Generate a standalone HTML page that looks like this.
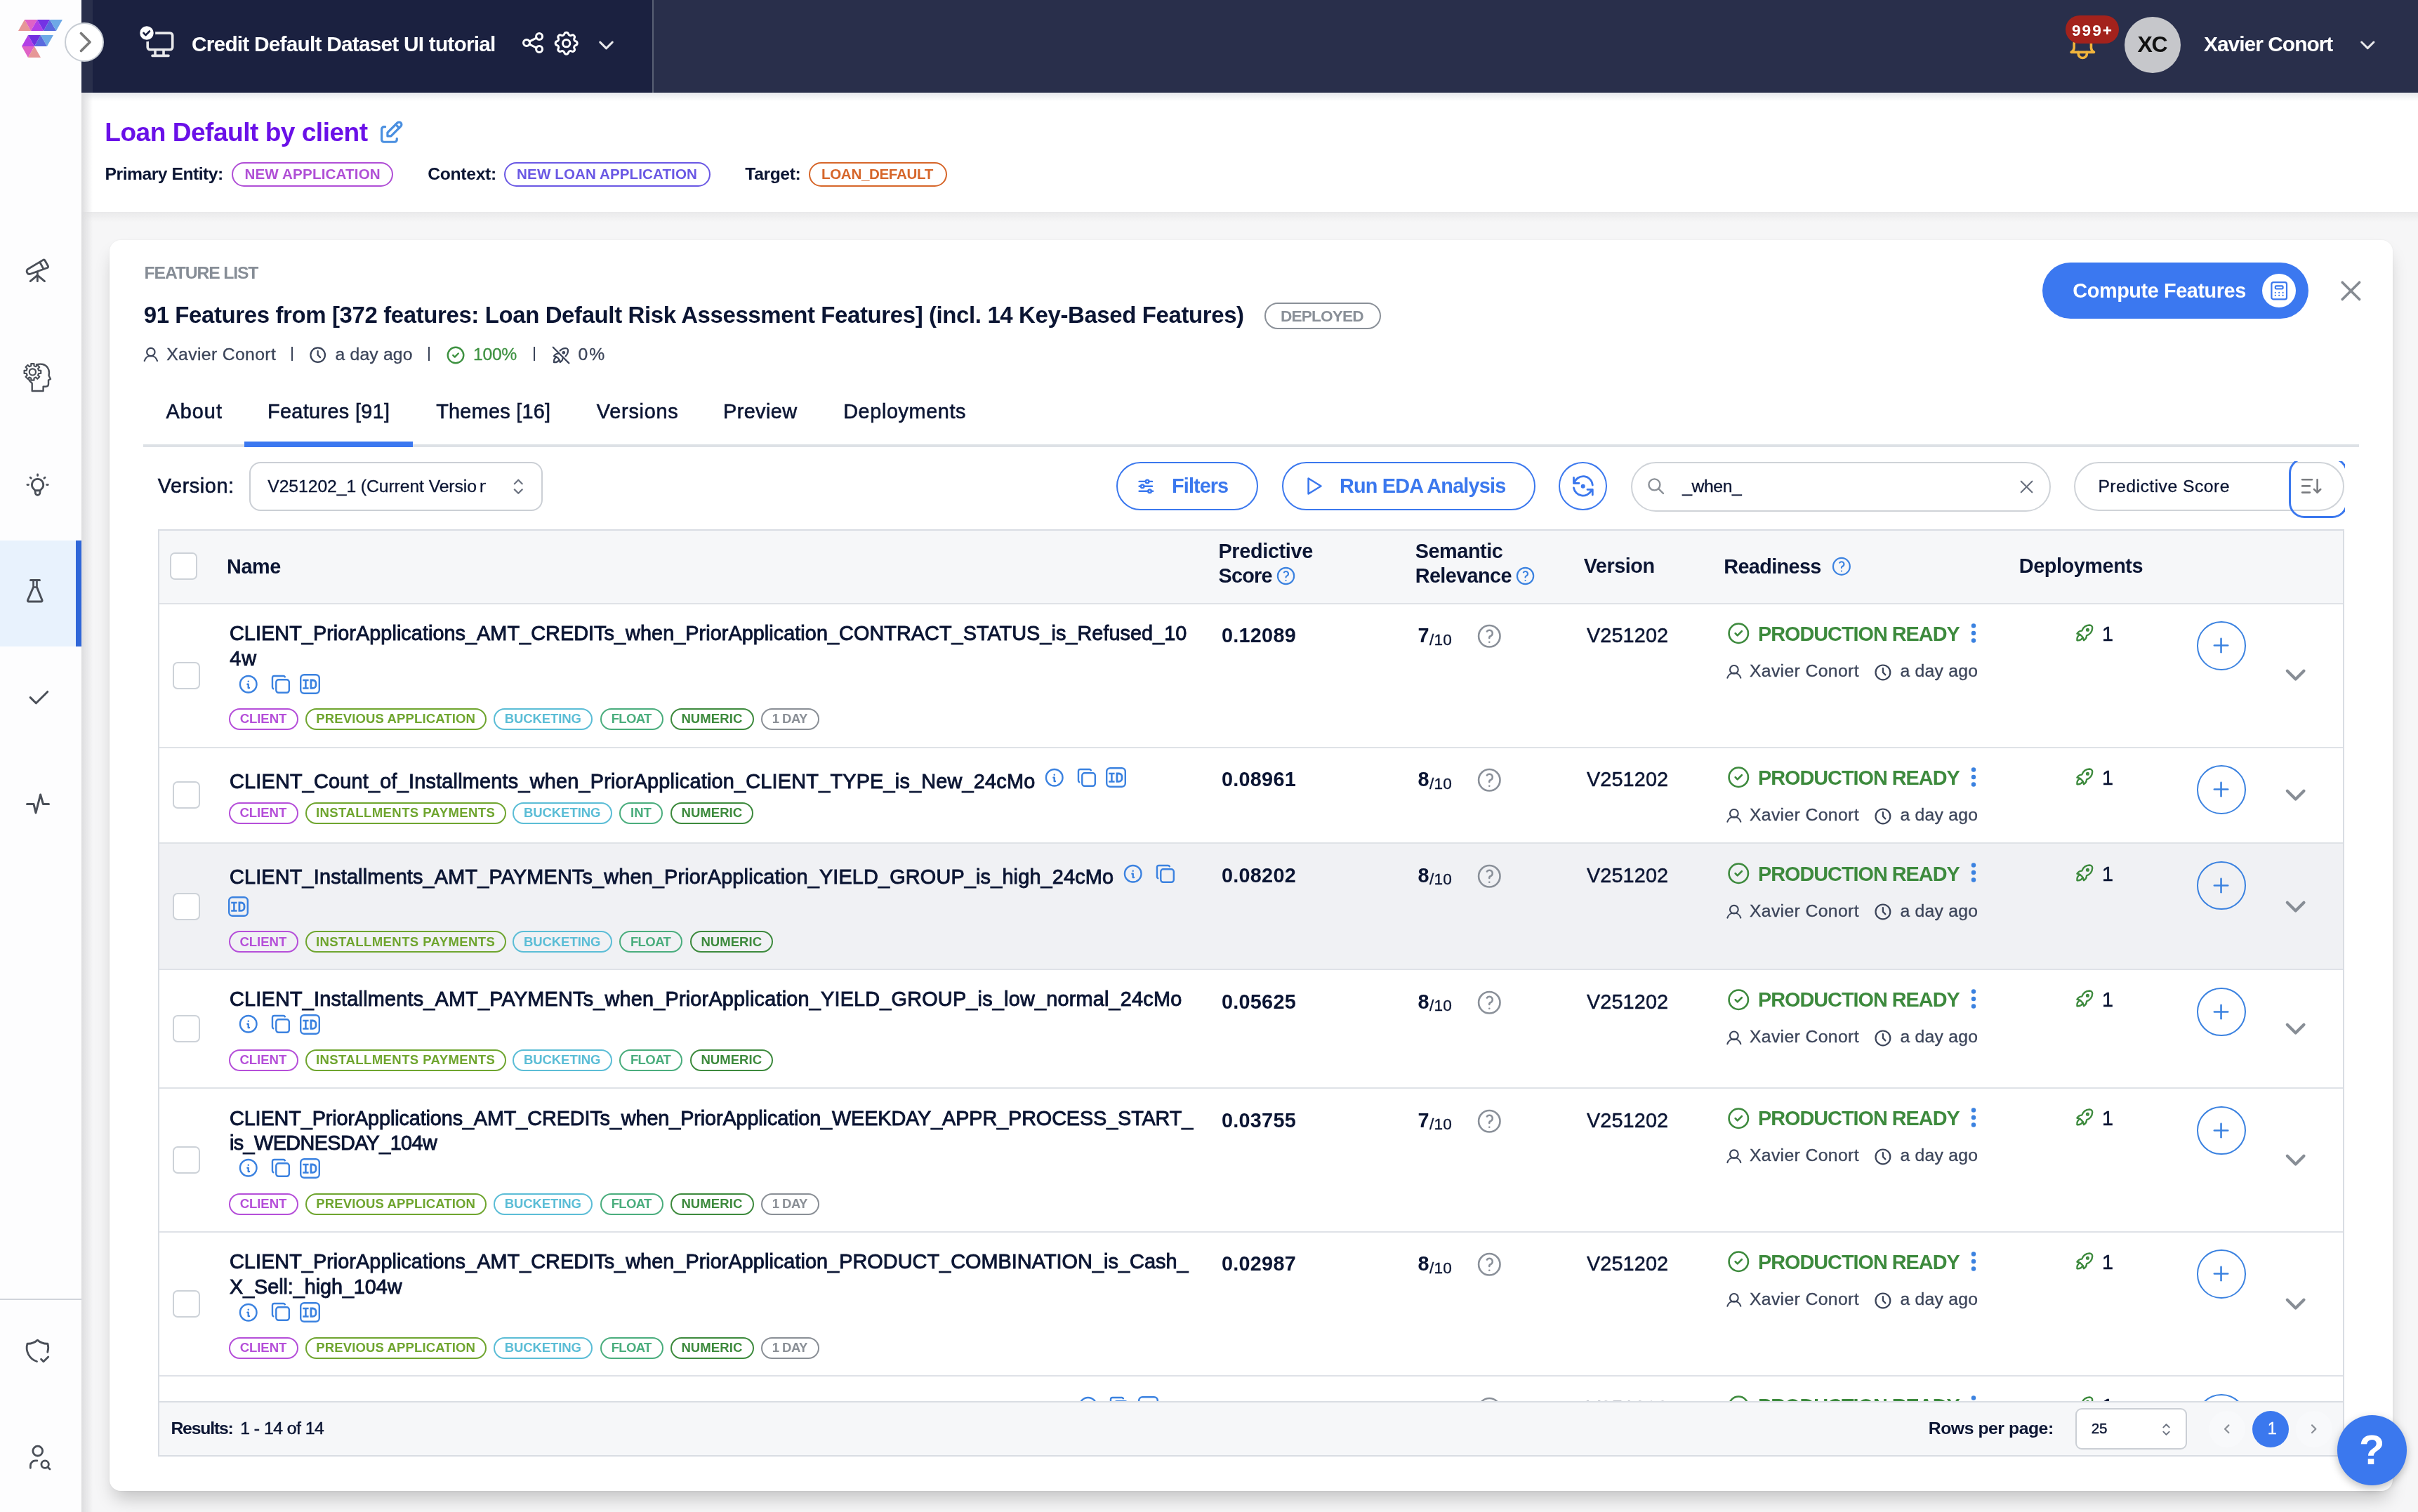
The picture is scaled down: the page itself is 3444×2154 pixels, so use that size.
<!DOCTYPE html><html><head><meta charset="utf-8"><title>Feature List</title><style>
html,body{margin:0;padding:0;}
body{width:3444px;height:2154px;position:relative;overflow:hidden;background:#f6f6f7;font-family:"Liberation Sans",sans-serif;}
div{box-sizing:border-box;}
.t{position:absolute;white-space:nowrap;line-height:1;}
svg{overflow:visible}
</style></head><body><div style="position:absolute;left:0;top:0;width:3444px;height:2154px;will-change:transform;">
<div style="position:absolute;left:116.00px;top:132.00px;width:3328.00px;height:170.00px;background:#fff;"></div>
<div style="position:absolute;left:116.00px;top:132.00px;width:3328.00px;height:12.00px;background:linear-gradient(#e6e8ec,rgba(255,255,255,0));"></div>
<div style="position:absolute;left:116.00px;top:302.00px;width:3328.00px;height:14.00px;background:linear-gradient(#e9e9ea,rgba(245,245,246,0));"></div>
<div style="position:absolute;left:116.00px;top:0.00px;width:3328.00px;height:132.00px;background:#292f4b;"></div>
<div style="position:absolute;left:132.00px;top:0.00px;width:797.00px;height:132.00px;background:#1b2140;"></div>
<div style="position:absolute;left:929.00px;top:0.00px;width:2.00px;height:132.00px;background:#596074;"></div>
<div style="position:absolute;left:0.00px;top:0.00px;width:116.00px;height:2154.00px;background:#fdfdfe;"></div>
<div style="position:absolute;left:116.00px;top:132.00px;width:16.00px;height:2022.00px;background:linear-gradient(90deg,#dcdcde,rgba(245,245,246,0));"></div>
<div style="position:absolute;left:0.00px;top:1850.00px;width:116.00px;height:2.00px;background:#d0d4da;"></div>
<svg style="position:absolute;left:0px;top:0px;" width="116" height="100" viewBox="0 0 116 100" fill="none"><polygon points="26,44 35,28 44,44" fill="#e69797"/><polygon points="35,28 53,28 44,44" fill="#df62c6"/><polygon points="44,44 53,28 62,44" fill="#b23fe6"/><polygon points="53,28 71,28 62,44" fill="#7433e4"/><polygon points="62,44 71,28 80,44" fill="#5a6ade"/><polygon points="71,28 89,28 80,44" fill="#6ea9e6"/><polygon points="31,66 40,50 49,66" fill="#b23fe6"/><polygon points="40,50 58,50 49,66" fill="#7030e0"/><polygon points="49,66 58,50 67,66" fill="#5a6ade"/><polygon points="58,50 76,50 67,66" fill="#6ea9e6"/><polygon points="31,66 49,66 40,82" fill="#df62c6"/><polygon points="40,82 49,66 58,82" fill="#e69797"/></svg>
<div style="position:absolute;left:92.00px;top:32.00px;width:56.00px;height:56.00px;border-radius:50%;background:#fff;border:2px solid #c8cdd4;"></div>
<svg style="position:absolute;left:92px;top:32px;" width="56" height="56" viewBox="0 0 56 56" fill="none"><path d="M23.5 15.5 L36 28 L23.5 40.5" stroke="#7b7b7b" stroke-width="3.8" stroke-linecap="round" stroke-linejoin="round"/></svg>
<svg style="position:absolute;left:196px;top:34px;" width="56" height="52" viewBox="0 0 56 52" fill="none"><rect x="14.2" y="13.1" width="35.5" height="23.7" rx="3.5" stroke="#e8e8ea" stroke-width="3.6"/>
<path d="M25 38 v6 M37 38 v6 M21 45.4 h23" stroke="#e8e8ea" stroke-width="3.6" stroke-linecap="round"/>
<circle cx="13" cy="13" r="11" fill="#fff" stroke="#1b2140" stroke-width="2.5"/>
<path d="M8.5 13 l3 3 l5.5-5.5" stroke="#1b2140" stroke-width="2.6" stroke-linecap="round" stroke-linejoin="round"/></svg>
<div class="t" style="left:273.00px;top:48.01px;font-size:29.87px;color:#ffffff;font-weight:700;letter-spacing:-0.794px;">Credit Default Dataset UI tutorial</div>
<svg style="position:absolute;left:741.08px;top:43.28px;" width="36.13" height="36.13" viewBox="0 0 24 24" fill="none" stroke="#ffffff" stroke-width="1.993" stroke-linecap="round" stroke-linejoin="round"><path d="M3 12a3 3 0 1 0 6 0a3 3 0 1 0 -6 0"/><path d="M15 6a3 3 0 1 0 6 0a3 3 0 1 0 -6 0"/><path d="M15 18a3 3 0 1 0 6 0a3 3 0 1 0 -6 0"/><path d="M8.7 10.7l6.6 -3.4"/><path d="M8.7 13.3l6.6 3.4"/></svg>
<svg style="position:absolute;left:786.33px;top:41.33px;" width="41.33" height="41.33" viewBox="0 0 24 24" fill="none" stroke="#ffffff" stroke-width="1.742" stroke-linecap="round" stroke-linejoin="round"><path d="M10.325 4.317c.426 -1.756 2.924 -1.756 3.35 0a1.724 1.724 0 0 0 2.573 1.066c1.543 -.94 3.31 .826 2.37 2.37a1.724 1.724 0 0 0 1.065 2.572c1.756 .426 1.756 2.924 0 3.35a1.724 1.724 0 0 0 -1.066 2.573c.94 1.543 -.826 3.31 -2.37 2.37a1.724 1.724 0 0 0 -2.572 1.065c-.426 1.756 -2.924 1.756 -3.35 0a1.724 1.724 0 0 0 -2.573 -1.066c-1.543 .94 -3.31 -.826 -2.37 -2.37a1.724 1.724 0 0 0 -1.065 -2.572c-1.756 -.426 -1.756 -2.924 0 -3.35a1.724 1.724 0 0 0 1.066 -2.573c-.94 -1.543 .826 -3.31 2.37 -2.37c1 .608 2.296 .07 2.572 -1.065z"/><path d="M9 12a3 3 0 1 0 6 0a3 3 0 0 0 -6 0"/></svg>
<svg style="position:absolute;left:845.50px;top:46.50px;" width="35.00" height="35.00" viewBox="0 0 24 24" fill="none" stroke="#e8e8ea" stroke-width="2.057" stroke-linecap="round" stroke-linejoin="round"><path d="M6 9l6 6l6 -6"/></svg>
<svg style="position:absolute;left:2941.50px;top:39.70px;" width="48.60" height="48.60" viewBox="0 0 24 24" fill="none" stroke="#f0b43c" stroke-width="1.778" stroke-linecap="round" stroke-linejoin="round"><path d="M10 5a2 2 0 1 1 4 0a7 7 0 0 1 4 6v3a4 4 0 0 0 2 3h-16a4 4 0 0 0 2 -3v-3a7 7 0 0 1 4 -6"/><path d="M9 17v1a3 3 0 0 0 6 0v-1"/></svg>
<div style="position:absolute;left:2942.00px;top:22.00px;width:76.00px;height:40.00px;background:#a3221c;border-radius:20px;"></div>
<div class="t" style="left:2951.00px;top:31.74px;font-size:22.66px;color:#ffffff;font-weight:700;letter-spacing:1.967px;">999+</div>
<div style="position:absolute;left:3026.00px;top:24.00px;width:80.00px;height:80.00px;background:#c6c7cb;border-radius:50%;"></div>
<div class="t" style="left:3044.50px;top:48.26px;font-size:31.93px;color:#111111;font-weight:700;letter-spacing:-1.300px;">XC</div>
<div class="t" style="left:3139.00px;top:48.41px;font-size:29.87px;color:#ffffff;font-weight:700;letter-spacing:-0.958px;">Xavier Conort</div>
<svg style="position:absolute;left:3354.70px;top:46.60px;" width="34.60" height="34.60" viewBox="0 0 24 24" fill="none" stroke="#e8e8ea" stroke-width="2.081" stroke-linecap="round" stroke-linejoin="round"><path d="M6 9l6 6l6 -6"/></svg>
<div class="t" style="left:149.30px;top:170.48px;font-size:37.08px;color:#6a10e8;font-weight:700;letter-spacing:-0.500px;">Loan Default by client</div>
<svg style="position:absolute;left:536.88px;top:168.99px;" width="39.88" height="39.88" viewBox="0 0 24 24" fill="none" stroke="#4a8fe0" stroke-width="1.926" stroke-linecap="round" stroke-linejoin="round"><path d="M7 7h-1a2 2 0 0 0 -2 2v9a2 2 0 0 0 2 2h9a2 2 0 0 0 2 -2v-1"/><path d="M20.385 6.585a2.1 2.1 0 0 0 -2.97 -2.97l-8.415 8.385v3h3l8.385 -8.415z"/><path d="M16 5l3 3"/></svg>
<div class="t" style="left:149.60px;top:235.79px;font-size:24.72px;color:#0b1533;font-weight:700;letter-spacing:-0.514px;">Primary Entity:</div>
<div style="position:absolute;left:330.40px;top:231.00px;width:229.90px;height:35.00px;border:2px solid #b04fd6;border-radius:40px;"></div>
<div class="t" style="left:348.40px;top:238.49px;font-size:20.6px;color:#b04fd6;font-weight:700;letter-spacing:0.164px;">NEW APPLICATION</div>
<div class="t" style="left:609.20px;top:235.79px;font-size:24.72px;color:#0b1533;font-weight:700;letter-spacing:-0.314px;">Context:</div>
<div style="position:absolute;left:718.40px;top:231.00px;width:293.30px;height:35.00px;border:2px solid #6a58e4;border-radius:40px;"></div>
<div class="t" style="left:736.10px;top:238.49px;font-size:20.6px;color:#6a58e4;font-weight:700;letter-spacing:0.089px;">NEW LOAN APPLICATION</div>
<div class="t" style="left:1061.30px;top:235.79px;font-size:24.72px;color:#0b1533;font-weight:700;letter-spacing:-0.417px;">Target:</div>
<div style="position:absolute;left:1152.30px;top:231.00px;width:196.40px;height:35.00px;border:2px solid #d6662a;border-radius:40px;"></div>
<div class="t" style="left:1170.00px;top:238.49px;font-size:20.6px;color:#d6662a;font-weight:700;letter-spacing:-0.364px;">LOAN_DEFAULT</div>
<div style="position:absolute;left:156.00px;top:342.00px;width:3252.00px;height:1782.00px;background:#fff;border-radius:16px;box-shadow:0 16px 26px -6px rgba(0,0,0,0.22),0 0 3px rgba(0,0,0,0.07);"></div>
<div class="t" style="left:205.60px;top:376.89px;font-size:24.72px;color:#868d96;font-weight:700;letter-spacing:-1.136px;">FEATURE LIST</div>
<div class="t" style="left:204.70px;top:432.78px;font-size:32.96px;color:#0b1533;font-weight:700;letter-spacing:-0.379px;">91 Features from [372 features: Loan Default Risk Assessment Features] (incl. 14 Key-Based Features)</div>
<div style="position:absolute;left:1800.50px;top:430.50px;width:166.70px;height:38.50px;border:2px solid #8a9098;border-radius:40px;"></div>
<div class="t" style="left:1824.00px;top:439.24px;font-size:22.66px;color:#8a9098;font-weight:700;letter-spacing:-0.843px;">DEPLOYED</div>
<svg style="position:absolute;left:0px;top:0px;" width="1" height="1" viewBox="0 0 1 1" fill="none"><circle cx="214.85" cy="501.50" r="5.70" stroke="#3b4459" stroke-width="2.2"/><path d="M205.70 514.20 C207.39 509.12 209.58 507.06 214.85 507.06 C220.13 507.06 222.31 509.12 224.00 514.20" stroke="#3b4459" stroke-width="2.2" stroke-linecap="round"/></svg>
<div class="t" style="left:237.20px;top:492.99px;font-size:24.72px;color:#3b4459;letter-spacing:0.375px;-webkit-text-stroke:0.3px #3b4459;">Xavier Conort</div>
<div style="position:absolute;left:415.00px;top:494.00px;width:2.00px;height:20.00px;background:#3b4459;"></div>
<svg style="position:absolute;left:439.15px;top:491.90px;" width="27.40" height="27.40" viewBox="0 0 24 24" fill="none" stroke="#3b4459" stroke-width="1.927" stroke-linecap="round" stroke-linejoin="round"><path d="M3 12a9 9 0 1 0 18 0a9 9 0 0 0 -18 0"/><path d="M12 7v5l3 3"/></svg>
<div class="t" style="left:477.50px;top:492.99px;font-size:24.72px;color:#3b4459;letter-spacing:0.175px;-webkit-text-stroke:0.3px #3b4459;">a day ago</div>
<div style="position:absolute;left:610.00px;top:494.00px;width:2.00px;height:20.00px;background:#3b4459;"></div>
<svg style="position:absolute;left:634.12px;top:490.57px;" width="30.07" height="30.07" viewBox="0 0 24 24" fill="none" stroke="#3d9140" stroke-width="1.916" stroke-linecap="round" stroke-linejoin="round"><path d="M3 12a9 9 0 1 0 18 0a9 9 0 0 0 -18 0"/><path d="M9 12l2 2l4 -4"/></svg>
<div class="t" style="left:674.00px;top:492.99px;font-size:24.72px;color:#3d9140;letter-spacing:-0.300px;-webkit-text-stroke:0.3px #3d9140;">100%</div>
<div style="position:absolute;left:760.00px;top:494.00px;width:2.00px;height:20.00px;background:#3b4459;"></div>
<svg style="position:absolute;left:783.93px;top:490.53px;" width="30.13" height="30.13" viewBox="0 0 24 24" fill="none" stroke="#3b4459" stroke-width="1.752" stroke-linecap="round" stroke-linejoin="round"><path d="M9.29 9.275a9.03 9.03 0 0 0 -.29 .725a6 6 0 0 0 -5 3a8 8 0 0 1 7 7a6 6 0 0 0 3 -5c.241 -.085 .478 -.18 .708 -.283m2.428 -1.61a9 9 0 0 0 2.864 -6.107a3 3 0 0 0 -3 -3a9 9 0 0 0 -6.107 2.864"/><path d="M7 14a6 6 0 0 0 -3 6a6 6 0 0 0 6 -3"/><path d="M14 9a1 1 0 1 0 2 0a1 1 0 1 0 -2 0"/><path d="M3 3l18 18"/></svg>
<div class="t" style="left:823.60px;top:492.99px;font-size:24.72px;color:#3b4459;letter-spacing:2.000px;-webkit-text-stroke:0.3px #3b4459;">0%</div>
<div class="t" style="left:236.50px;top:572.29px;font-size:28.84px;color:#0b1533;letter-spacing:1.025px;-webkit-text-stroke:0.6px #0b1533;">About</div>
<div class="t" style="left:381.00px;top:572.29px;font-size:28.84px;color:#0b1533;letter-spacing:0.350px;-webkit-text-stroke:0.6px #0b1533;">Features [91]</div>
<div class="t" style="left:621.20px;top:572.29px;font-size:28.84px;color:#0b1533;letter-spacing:0.270px;-webkit-text-stroke:0.6px #0b1533;">Themes [16]</div>
<div class="t" style="left:849.80px;top:572.29px;font-size:28.84px;color:#0b1533;letter-spacing:0.771px;-webkit-text-stroke:0.6px #0b1533;">Versions</div>
<div class="t" style="left:1030.00px;top:572.29px;font-size:28.84px;color:#0b1533;letter-spacing:0.417px;-webkit-text-stroke:0.6px #0b1533;">Preview</div>
<div class="t" style="left:1201.20px;top:572.29px;font-size:28.84px;color:#0b1533;letter-spacing:0.610px;-webkit-text-stroke:0.6px #0b1533;">Deployments</div>
<div style="position:absolute;left:204.00px;top:633.00px;width:3156.00px;height:4.00px;background:#dde1e6;"></div>
<div style="position:absolute;left:348.00px;top:629.00px;width:240.00px;height:8.00px;background:#3b78f0;"></div>
<div style="position:absolute;left:2909.00px;top:374.00px;width:379.00px;height:80.00px;background:#3b78f0;border-radius:40px;"></div>
<div class="t" style="left:2952.30px;top:399.89px;font-size:28.84px;color:#ffffff;font-weight:700;letter-spacing:-0.407px;">Compute Features</div>
<div style="position:absolute;left:3222.00px;top:390.00px;width:48.00px;height:48.00px;background:#fff;border-radius:50%;"></div>
<svg style="position:absolute;left:3229.79px;top:397.64px;" width="32.42" height="32.42" viewBox="0 0 24 24" fill="none" stroke="#3b78ee" stroke-width="1.629" stroke-linecap="round" stroke-linejoin="round"><path d="M4 5a2 2 0 0 1 2 -2h12a2 2 0 0 1 2 2v14a2 2 0 0 1 -2 2h-12a2 2 0 0 1 -2 -2z"/><path d="M8 8a1 1 0 0 1 1 -1h6a1 1 0 0 1 1 1v1a1 1 0 0 1 -1 1h-6a1 1 0 0 1 -1 -1z"/><path d="M8 14l0 .01"/><path d="M12 14l0 .01"/><path d="M16 14l0 .01"/><path d="M8 17l0 .01"/><path d="M12 17l0 .01"/><path d="M16 17l0 .01"/></svg>
<svg style="position:absolute;left:3323.60px;top:389.60px;" width="48.80" height="48.80" viewBox="0 0 24 24" fill="none" stroke="#868b92" stroke-width="1.770" stroke-linecap="round" stroke-linejoin="round"><path d="M18 6l-12 12"/><path d="M6 6l12 12"/></svg>
<div class="t" style="left:224.80px;top:678.39px;font-size:28.84px;color:#0b1533;letter-spacing:0.586px;-webkit-text-stroke:0.6px #0b1533;">Version:</div>
<div style="position:absolute;left:354.80px;top:657.50px;width:418.20px;height:70.80px;border:2px solid #cbcfd5;border-radius:16px;background:#fff;"></div>
<div style="position:absolute;left:378px;top:670px;width:314.3px;height:44px;overflow:hidden;">
<div class="t" style="left:3.30px;top:10.79px;font-size:24.72px;color:#0b1533;letter-spacing:-0.079px;-webkit-text-stroke:0.3px #0b1533;">V251202_1 (Current Versio</div>
<div class="t" style="left:305.00px;top:10.79px;font-size:24.72px;color:#0b1533;-webkit-text-stroke:0.3px #0b1533;">n</div>
</div>
<svg style="position:absolute;left:721.81px;top:676.61px;" width="32.57" height="32.57" viewBox="0 0 24 24" fill="none" stroke="#6b7280" stroke-width="1.621" stroke-linecap="round" stroke-linejoin="round"><path d="M8 9l4 -4l4 4"/><path d="M16 15l-4 4l-4 -4"/></svg>
<div style="position:absolute;left:1589.50px;top:658.40px;width:202.50px;height:68.40px;border:2px solid #3b78ee;border-radius:40px;"></div>
<svg style="position:absolute;left:1618.20px;top:679.17px;" width="27.65" height="27.65" viewBox="0 0 24 24" fill="none" stroke="#3b78ee" stroke-width="2.083" stroke-linecap="round" stroke-linejoin="round"><path d="M12 6a2 2 0 1 0 4 0a2 2 0 1 0 -4 0"/><path d="M4 6l8 0"/><path d="M16 6l4 0"/><path d="M6 12a2 2 0 1 0 4 0a2 2 0 1 0 -4 0"/><path d="M4 12l2 0"/><path d="M10 12l10 0"/><path d="M15 18a2 2 0 1 0 4 0a2 2 0 1 0 -4 0"/><path d="M4 18l11 0"/><path d="M19 18l2 0"/></svg>
<div class="t" style="left:1669.10px;top:678.39px;font-size:28.84px;color:#3b78ee;font-weight:700;letter-spacing:-0.917px;">Filters</div>
<div style="position:absolute;left:1825.70px;top:658.40px;width:361.30px;height:68.40px;border:2px solid #3b78ee;border-radius:40px;"></div>
<svg style="position:absolute;left:1853.92px;top:676.48px;" width="33.03" height="33.03" viewBox="0 0 24 24" fill="none" stroke="#3b78ee" stroke-width="1.889" stroke-linecap="round" stroke-linejoin="round"><path d="M7 4v16l13 -8z"/></svg>
<div class="t" style="left:1908.00px;top:678.39px;font-size:28.84px;color:#3b78ee;font-weight:700;letter-spacing:-0.807px;">Run EDA Analysis</div>
<div style="position:absolute;left:2220.00px;top:658.40px;width:68.70px;height:68.40px;border:2px solid #3b78ee;border-radius:50%;"></div>
<svg style="position:absolute;left:2220px;top:658px;" width="70" height="70" viewBox="0 0 70 70" fill="none"><path d="M21.5 22.5 V30.5 H29" stroke="#3b78ee" stroke-width="2.8" stroke-linecap="round" stroke-linejoin="round"/>
<path d="M22 30.5 A13.4 13.4 0 0 1 48.3 33" stroke="#3b78ee" stroke-width="2.8" stroke-linecap="round"/>
<path d="M21.5 37 A13.4 13.4 0 0 0 46.5 41" stroke="#3b78ee" stroke-width="2.8" stroke-linecap="round"/>
<path d="M41 39.4 H48.3 V47" stroke="#3b78ee" stroke-width="2.8" stroke-linecap="round" stroke-linejoin="round"/>
<circle cx="34.7" cy="34.7" r="3" fill="#3b78ee"/></svg>
<div style="position:absolute;left:2322.70px;top:658.00px;width:598.50px;height:70.50px;border:2px solid #cfd3d8;border-radius:40px;background:#fff;"></div>
<svg style="position:absolute;left:2344.50px;top:679.05px;" width="27.40" height="27.40" viewBox="0 0 24 24" fill="none" stroke="#8b9097" stroke-width="2.102" stroke-linecap="round" stroke-linejoin="round"><path d="M3 10a7 7 0 1 0 14 0a7 7 0 1 0 -14 0"/><path d="M21 21l-6 -6"/></svg>
<div class="t" style="left:2396.30px;top:680.79px;font-size:24.72px;color:#0b1533;letter-spacing:-0.440px;-webkit-text-stroke:0.3px #0b1533;">_when_</div>
<svg style="position:absolute;left:2870.65px;top:678.20px;" width="31.10" height="31.10" viewBox="0 0 24 24" fill="none" stroke="#6b7280" stroke-width="1.698" stroke-linecap="round" stroke-linejoin="round"><path d="M18 6l-12 12"/><path d="M6 6l12 12"/></svg>
<div style="position:absolute;left:2954.30px;top:658.00px;width:385.20px;height:70.00px;border:2px solid #cfd3d8;border-radius:40px;background:#fff;"></div>
<div class="t" style="left:2988.40px;top:681.49px;font-size:24.72px;color:#0b1533;letter-spacing:0.473px;-webkit-text-stroke:0.3px #0b1533;">Predictive Score</div>
<div style="position:absolute;left:3255px;top:657px;width:84.5px;height:90px;overflow:hidden;">
<div style="position:absolute;left:5.20px;top:-5.00px;width:84.00px;height:86.00px;border:3.8px solid #3b78ee;border-radius:22px;"></div>
</div>
<svg style="position:absolute;left:3273.32px;top:674.34px;" width="36.83" height="36.83" viewBox="0 0 24 24" fill="none" stroke="#7a7c80" stroke-width="1.694" stroke-linecap="round" stroke-linejoin="round"><path d="M4 6l9 0"/><path d="M4 12l7 0"/><path d="M4 18l7 0"/><path d="M15 15l3 3l3 -3"/><path d="M18 6l0 12"/></svg>
<div style="position:absolute;left:224.80px;top:753.50px;width:3114.70px;height:106.00px;background:#f6f7f9;"></div>
<div style="position:absolute;left:224.80px;top:1201.30px;width:3114.70px;height:179.70px;background:#f0f1f4;"></div>
<div style="position:absolute;left:224.80px;top:858.50px;width:3114.70px;height:2.00px;background:#dfe2e7;"></div>
<div style="position:absolute;left:224.80px;top:1063.50px;width:3114.70px;height:2.00px;background:#dfe2e7;"></div>
<div style="position:absolute;left:224.80px;top:1200.30px;width:3114.70px;height:2.00px;background:#dfe2e7;"></div>
<div style="position:absolute;left:224.80px;top:1380.00px;width:3114.70px;height:2.00px;background:#dfe2e7;"></div>
<div style="position:absolute;left:224.80px;top:1548.80px;width:3114.70px;height:2.00px;background:#dfe2e7;"></div>
<div style="position:absolute;left:224.80px;top:1753.50px;width:3114.70px;height:2.00px;background:#dfe2e7;"></div>
<div style="position:absolute;left:224.80px;top:1958.80px;width:3114.70px;height:2.00px;background:#dfe2e7;"></div>
<div style="position:absolute;left:242.30px;top:787.20px;width:39.00px;height:39.00px;border:2px solid #cdd2d8;border-radius:7px;background:#fff;"></div>
<div class="t" style="left:323.00px;top:793.19px;font-size:28.84px;color:#0b1533;font-weight:700;letter-spacing:-0.400px;">Name</div>
<div class="t" style="left:1735.40px;top:770.79px;font-size:28.84px;color:#0b1533;font-weight:700;letter-spacing:-0.322px;">Predictive</div>
<div class="t" style="left:1735.40px;top:805.79px;font-size:28.84px;color:#0b1533;font-weight:700;letter-spacing:-0.725px;">Score</div>
<svg style="position:absolute;left:1816.27px;top:805.47px;" width="31.07" height="31.07" viewBox="0 0 24 24" fill="none" stroke="#3b82e0" stroke-width="1.700" stroke-linecap="round" stroke-linejoin="round"><path d="M3 12a9 9 0 1 0 18 0a9 9 0 1 0 -18 0"/><path d="M12 17l0 .01"/><path d="M12 13.5a1.5 1.5 0 0 1 1 -1.5a2.6 2.6 0 1 0 -3 -4"/></svg>
<div class="t" style="left:2015.70px;top:770.79px;font-size:28.84px;color:#0b1533;font-weight:700;letter-spacing:-0.429px;">Semantic</div>
<div class="t" style="left:2015.70px;top:805.79px;font-size:28.84px;color:#0b1533;font-weight:700;letter-spacing:-0.613px;">Relevance</div>
<svg style="position:absolute;left:2157.37px;top:805.47px;" width="31.07" height="31.07" viewBox="0 0 24 24" fill="none" stroke="#3b82e0" stroke-width="1.700" stroke-linecap="round" stroke-linejoin="round"><path d="M3 12a9 9 0 1 0 18 0a9 9 0 1 0 -18 0"/><path d="M12 17l0 .01"/><path d="M12 13.5a1.5 1.5 0 0 1 1 -1.5a2.6 2.6 0 1 0 -3 -4"/></svg>
<div class="t" style="left:2255.70px;top:792.49px;font-size:28.84px;color:#0b1533;font-weight:700;letter-spacing:-0.450px;">Version</div>
<div class="t" style="left:2455.20px;top:792.89px;font-size:28.84px;color:#0b1533;font-weight:700;letter-spacing:-0.625px;">Readiness</div>
<svg style="position:absolute;left:2607.05px;top:791.10px;" width="31.80" height="31.80" viewBox="0 0 24 24" fill="none" stroke="#3b82e0" stroke-width="1.660" stroke-linecap="round" stroke-linejoin="round"><path d="M3 12a9 9 0 1 0 18 0a9 9 0 1 0 -18 0"/><path d="M12 17l0 .01"/><path d="M12 13.5a1.5 1.5 0 0 1 1 -1.5a2.6 2.6 0 1 0 -3 -4"/></svg>
<div class="t" style="left:2875.80px;top:792.49px;font-size:28.84px;color:#0b1533;font-weight:700;letter-spacing:-0.430px;">Deployments</div>
<div style="position:absolute;left:246.00px;top:942.50px;width:39.00px;height:39.00px;border:2px solid #cdd2d8;border-radius:7px;background:#fff;"></div>
<div class="t" style="left:1740.00px;top:891.39px;font-size:28.84px;color:#0b1533;font-weight:700;letter-spacing:0.250px;">0.12089</div>
<div class="t" style="left:2019.40px;top:891.39px;font-size:28.84px;color:#0b1533;font-weight:700;">7</div>
<div class="t" style="left:2036.00px;top:899.54px;font-size:22.66px;color:#0b1533;letter-spacing:0.200px;-webkit-text-stroke:0.3px #0b1533;">/10</div>
<svg style="position:absolute;left:2100.50px;top:886.45px;" width="40.60" height="40.60" viewBox="0 0 24 24" fill="none" stroke="#8a9099" stroke-width="1.537" stroke-linecap="round" stroke-linejoin="round"><path d="M3 12a9 9 0 1 0 18 0a9 9 0 1 0 -18 0"/><path d="M12 17l0 .01"/><path d="M12 13.5a1.5 1.5 0 0 1 1 -1.5a2.6 2.6 0 1 0 -3 -4"/></svg>
<div class="t" style="left:2259.90px;top:891.49px;font-size:28.84px;color:#0b1533;letter-spacing:0.133px;-webkit-text-stroke:0.5px #0b1533;">V251202</div>
<svg style="position:absolute;left:2458.48px;top:884.48px;" width="36.53" height="36.53" viewBox="0 0 24 24" fill="none" stroke="#3d8a3d" stroke-width="1.708" stroke-linecap="round" stroke-linejoin="round"><path d="M3 12a9 9 0 1 0 18 0a9 9 0 0 0 -18 0"/><path d="M9 12l2 2l4 -4"/></svg>
<div class="t" style="left:2504.00px;top:888.89px;font-size:28.84px;color:#3d8a3d;font-weight:700;letter-spacing:-1.000px;">PRODUCTION READY</div>
<svg style="position:absolute;left:2806px;top:886.5px;" width="10" height="32" viewBox="0 0 10 32" fill="none"><circle cx="5" cy="4.5" r="3.2" fill="#3b82e0"/><circle cx="5" cy="15" r="3.2" fill="#3b82e0"/><circle cx="5" cy="25.5" r="3.2" fill="#3b82e0"/></svg>
<svg style="position:absolute;left:0px;top:0px;" width="1" height="1" viewBox="0 0 1 1" fill="none"><circle cx="2469.85" cy="953.91" r="5.86" stroke="#3b4459" stroke-width="2.1"/><path d="M2460.35 965.75 C2462.09 960.86 2464.43 958.88 2469.85 958.88 C2475.27 958.88 2477.61 960.86 2479.35 965.75" stroke="#3b4459" stroke-width="2.1" stroke-linecap="round"/></svg>
<div class="t" style="left:2491.90px;top:943.99px;font-size:24.72px;color:#3b4459;letter-spacing:0.375px;-webkit-text-stroke:0.3px #3b4459;">Xavier Conort</div>
<svg style="position:absolute;left:2668.15px;top:943.60px;" width="27.80" height="27.80" viewBox="0 0 24 24" fill="none" stroke="#3b4459" stroke-width="1.899" stroke-linecap="round" stroke-linejoin="round"><path d="M3 12a9 9 0 1 0 18 0a9 9 0 0 0 -18 0"/><path d="M12 7v5l3 3"/></svg>
<div class="t" style="left:2706.50px;top:943.99px;font-size:24.72px;color:#3b4459;letter-spacing:0.250px;-webkit-text-stroke:0.3px #3b4459;">a day ago</div>
<svg style="position:absolute;left:2952.50px;top:884.86px;" width="32.65" height="32.65" viewBox="0 0 24 24" fill="none" stroke="#3d8a3d" stroke-width="1.764" stroke-linecap="round" stroke-linejoin="round"><path d="M4 13a8 8 0 0 1 7 7a6 6 0 0 0 3 -5a9 9 0 0 0 6 -8a3 3 0 0 0 -3 -3a9 9 0 0 0 -8 6a6 6 0 0 0 -5 3"/><path d="M7 14a6 6 0 0 0 -3 6a6 6 0 0 0 6 -3"/><path d="M14 9a1 1 0 1 0 2 0a1 1 0 1 0 -2 0"/></svg>
<div class="t" style="left:2994.00px;top:888.99px;font-size:28.84px;color:#0b1533;-webkit-text-stroke:0.5px #0b1533;">1</div>
<div style="position:absolute;left:3129.20px;top:885.20px;width:69.40px;height:69.40px;border:2px solid #3b82e0;border-radius:50%;"></div>
<svg style="position:absolute;left:3147.41px;top:903.41px;" width="33.09" height="33.09" viewBox="0 0 24 24" fill="none" stroke="#3b82e0" stroke-width="1.886" stroke-linecap="round" stroke-linejoin="round"><path d="M12 5l0 14"/><path d="M5 12l14 0"/></svg>
<svg style="position:absolute;left:3246.30px;top:938.35px;" width="47.30" height="47.30" viewBox="0 0 24 24" fill="none" stroke="#878d95" stroke-width="2.131" stroke-linecap="round" stroke-linejoin="round"><path d="M6 9l6 6l6 -6"/></svg>
<div class="t" style="left:327.00px;top:888.49px;font-size:28.84px;color:#0b1533;letter-spacing:0.048px;-webkit-text-stroke:0.9px #0b1533;">CLIENT_PriorApplications_AMT_CREDITs_when_PriorApplication_CONTRACT_STATUS_is_Refused_10</div>
<div class="t" style="left:327.20px;top:924.19px;font-size:28.84px;color:#0b1533;letter-spacing:1.100px;-webkit-text-stroke:0.9px #0b1533;">4w</div>
<svg style="position:absolute;left:338.27px;top:959.27px;" width="31.47" height="31.47" viewBox="0 0 24 24" fill="none" stroke="#3b82e0" stroke-width="1.831" stroke-linecap="round" stroke-linejoin="round"><path d="M3 12a9 9 0 1 0 18 0a9 9 0 0 0 -18 0"/><path d="M12 9h.01"/><path d="M11 12h1v4h1"/></svg>
<svg style="position:absolute;left:383.95px;top:958.70px;" width="31.80" height="31.80" viewBox="0 0 24 24" fill="none" stroke="#3b82e0" stroke-width="1.811" stroke-linecap="round" stroke-linejoin="round"><path d="M7 9.667a2.667 2.667 0 0 1 2.667 -2.667h8.666a2.667 2.667 0 0 1 2.667 2.667v8.666a2.667 2.667 0 0 1 -2.667 2.667h-8.666a2.667 2.667 0 0 1 -2.667 -2.667z"/><path d="M4.012 16.737a2.005 2.005 0 0 1 -1.012 -1.737v-10c0 -1.1 .9 -2 2 -2h10c.75 0 1.158 .385 1.5 1"/></svg>
<svg style="position:absolute;left:427px;top:960px;" width="29" height="29" viewBox="0 0 29 29" fill="none"><rect x="1.2" y="1.2" width="26.6" height="26.6" rx="5" stroke="#3b82e0" stroke-width="2.4"/><path d="M4.2 9 H12.6 M4.2 20.4 H12.6" stroke="#3b82e0" stroke-width="2.5"/><path d="M8.4 9 V20.4" stroke="#3b82e0" stroke-width="2.6"/><path d="M15.9 9 H18.6 a4.4 4.4 0 0 1 4.4 4.4 V16 a4.4 4.4 0 0 1 -4.4 4.4 H15.9 Z" stroke="#3b82e0" stroke-width="2.8"/></svg>
<div style="position:absolute;left:326.20px;top:1008.90px;width:98.50px;height:31.00px;border:2px solid #b54fd9;border-radius:40px;"></div>
<div class="t" style="left:341.70px;top:1015.14px;font-size:18.54px;color:#b54fd9;font-weight:700;letter-spacing:-0.060px;">CLIENT</div>
<div style="position:absolute;left:434.80px;top:1008.90px;width:258.20px;height:31.00px;border:2px solid #6fa52f;border-radius:40px;"></div>
<div class="t" style="left:450.30px;top:1015.14px;font-size:18.54px;color:#6fa52f;font-weight:700;letter-spacing:0.111px;">PREVIOUS APPLICATION</div>
<div style="position:absolute;left:703.20px;top:1008.90px;width:141.00px;height:31.00px;border:2px solid #5bbdd6;border-radius:40px;"></div>
<div class="t" style="left:718.70px;top:1015.14px;font-size:18.54px;color:#5bbdd6;font-weight:700;letter-spacing:-0.125px;">BUCKETING</div>
<div style="position:absolute;left:855.20px;top:1008.90px;width:89.60px;height:31.00px;border:2px solid #4aad7d;border-radius:40px;"></div>
<div class="t" style="left:870.70px;top:1015.14px;font-size:18.54px;color:#4aad7d;font-weight:700;letter-spacing:-0.675px;">FLOAT</div>
<div style="position:absolute;left:954.90px;top:1008.90px;width:118.80px;height:31.00px;border:2px solid #3d8a3d;border-radius:40px;"></div>
<div class="t" style="left:970.40px;top:1015.14px;font-size:18.54px;color:#3d8a3d;font-weight:700;letter-spacing:0.083px;">NUMERIC</div>
<div style="position:absolute;left:1084.20px;top:1008.90px;width:82.70px;height:31.00px;border:2px solid #8a8f96;border-radius:40px;"></div>
<div class="t" style="left:1099.70px;top:1015.14px;font-size:18.54px;color:#8a8f96;font-weight:700;letter-spacing:-0.525px;">1 DAY</div>
<div style="position:absolute;left:246.00px;top:1113.40px;width:39.00px;height:39.00px;border:2px solid #cdd2d8;border-radius:7px;background:#fff;"></div>
<div class="t" style="left:1740.00px;top:1096.39px;font-size:28.84px;color:#0b1533;font-weight:700;letter-spacing:0.250px;">0.08961</div>
<div class="t" style="left:2019.40px;top:1096.39px;font-size:28.84px;color:#0b1533;font-weight:700;">8</div>
<div class="t" style="left:2036.00px;top:1104.54px;font-size:22.66px;color:#0b1533;letter-spacing:0.200px;-webkit-text-stroke:0.3px #0b1533;">/10</div>
<svg style="position:absolute;left:2100.50px;top:1091.45px;" width="40.60" height="40.60" viewBox="0 0 24 24" fill="none" stroke="#8a9099" stroke-width="1.537" stroke-linecap="round" stroke-linejoin="round"><path d="M3 12a9 9 0 1 0 18 0a9 9 0 1 0 -18 0"/><path d="M12 17l0 .01"/><path d="M12 13.5a1.5 1.5 0 0 1 1 -1.5a2.6 2.6 0 1 0 -3 -4"/></svg>
<div class="t" style="left:2259.90px;top:1096.49px;font-size:28.84px;color:#0b1533;letter-spacing:0.133px;-webkit-text-stroke:0.5px #0b1533;">V251202</div>
<svg style="position:absolute;left:2458.48px;top:1089.48px;" width="36.53" height="36.53" viewBox="0 0 24 24" fill="none" stroke="#3d8a3d" stroke-width="1.708" stroke-linecap="round" stroke-linejoin="round"><path d="M3 12a9 9 0 1 0 18 0a9 9 0 0 0 -18 0"/><path d="M9 12l2 2l4 -4"/></svg>
<div class="t" style="left:2504.00px;top:1093.89px;font-size:28.84px;color:#3d8a3d;font-weight:700;letter-spacing:-1.000px;">PRODUCTION READY</div>
<svg style="position:absolute;left:2806px;top:1091.5px;" width="10" height="32" viewBox="0 0 10 32" fill="none"><circle cx="5" cy="4.5" r="3.2" fill="#3b82e0"/><circle cx="5" cy="15" r="3.2" fill="#3b82e0"/><circle cx="5" cy="25.5" r="3.2" fill="#3b82e0"/></svg>
<svg style="position:absolute;left:0px;top:0px;" width="1" height="1" viewBox="0 0 1 1" fill="none"><circle cx="2469.85" cy="1158.91" r="5.86" stroke="#3b4459" stroke-width="2.1"/><path d="M2460.35 1170.75 C2462.09 1165.86 2464.43 1163.88 2469.85 1163.88 C2475.27 1163.88 2477.61 1165.86 2479.35 1170.75" stroke="#3b4459" stroke-width="2.1" stroke-linecap="round"/></svg>
<div class="t" style="left:2491.90px;top:1148.99px;font-size:24.72px;color:#3b4459;letter-spacing:0.375px;-webkit-text-stroke:0.3px #3b4459;">Xavier Conort</div>
<svg style="position:absolute;left:2668.15px;top:1148.60px;" width="27.80" height="27.80" viewBox="0 0 24 24" fill="none" stroke="#3b4459" stroke-width="1.899" stroke-linecap="round" stroke-linejoin="round"><path d="M3 12a9 9 0 1 0 18 0a9 9 0 0 0 -18 0"/><path d="M12 7v5l3 3"/></svg>
<div class="t" style="left:2706.50px;top:1148.99px;font-size:24.72px;color:#3b4459;letter-spacing:0.250px;-webkit-text-stroke:0.3px #3b4459;">a day ago</div>
<svg style="position:absolute;left:2952.50px;top:1089.86px;" width="32.65" height="32.65" viewBox="0 0 24 24" fill="none" stroke="#3d8a3d" stroke-width="1.764" stroke-linecap="round" stroke-linejoin="round"><path d="M4 13a8 8 0 0 1 7 7a6 6 0 0 0 3 -5a9 9 0 0 0 6 -8a3 3 0 0 0 -3 -3a9 9 0 0 0 -8 6a6 6 0 0 0 -5 3"/><path d="M7 14a6 6 0 0 0 -3 6a6 6 0 0 0 6 -3"/><path d="M14 9a1 1 0 1 0 2 0a1 1 0 1 0 -2 0"/></svg>
<div class="t" style="left:2994.00px;top:1093.99px;font-size:28.84px;color:#0b1533;-webkit-text-stroke:0.5px #0b1533;">1</div>
<div style="position:absolute;left:3129.20px;top:1090.20px;width:69.40px;height:69.40px;border:2px solid #3b82e0;border-radius:50%;"></div>
<svg style="position:absolute;left:3147.41px;top:1108.41px;" width="33.09" height="33.09" viewBox="0 0 24 24" fill="none" stroke="#3b82e0" stroke-width="1.886" stroke-linecap="round" stroke-linejoin="round"><path d="M12 5l0 14"/><path d="M5 12l14 0"/></svg>
<svg style="position:absolute;left:3246.30px;top:1109.25px;" width="47.30" height="47.30" viewBox="0 0 24 24" fill="none" stroke="#878d95" stroke-width="2.131" stroke-linecap="round" stroke-linejoin="round"><path d="M6 9l6 6l6 -6"/></svg>
<div class="t" style="left:327.00px;top:1098.79px;font-size:28.84px;color:#0b1533;letter-spacing:0.216px;-webkit-text-stroke:0.9px #0b1533;">CLIENT_Count_of_Installments_when_PriorApplication_CLIENT_TYPE_is_New_24cMo</div>
<svg style="position:absolute;left:1486.17px;top:1092.27px;" width="31.47" height="31.47" viewBox="0 0 24 24" fill="none" stroke="#3b82e0" stroke-width="1.831" stroke-linecap="round" stroke-linejoin="round"><path d="M3 12a9 9 0 1 0 18 0a9 9 0 0 0 -18 0"/><path d="M12 9h.01"/><path d="M11 12h1v4h1"/></svg>
<svg style="position:absolute;left:1532.15px;top:1091.70px;" width="31.80" height="31.80" viewBox="0 0 24 24" fill="none" stroke="#3b82e0" stroke-width="1.811" stroke-linecap="round" stroke-linejoin="round"><path d="M7 9.667a2.667 2.667 0 0 1 2.667 -2.667h8.666a2.667 2.667 0 0 1 2.667 2.667v8.666a2.667 2.667 0 0 1 -2.667 2.667h-8.666a2.667 2.667 0 0 1 -2.667 -2.667z"/><path d="M4.012 16.737a2.005 2.005 0 0 1 -1.012 -1.737v-10c0 -1.1 .9 -2 2 -2h10c.75 0 1.158 .385 1.5 1"/></svg>
<svg style="position:absolute;left:1575px;top:1093px;" width="29" height="29" viewBox="0 0 29 29" fill="none"><rect x="1.2" y="1.2" width="26.6" height="26.6" rx="5" stroke="#3b82e0" stroke-width="2.4"/><path d="M4.2 9 H12.6 M4.2 20.4 H12.6" stroke="#3b82e0" stroke-width="2.5"/><path d="M8.4 9 V20.4" stroke="#3b82e0" stroke-width="2.6"/><path d="M15.9 9 H18.6 a4.4 4.4 0 0 1 4.4 4.4 V16 a4.4 4.4 0 0 1 -4.4 4.4 H15.9 Z" stroke="#3b82e0" stroke-width="2.8"/></svg>
<div style="position:absolute;left:326.00px;top:1142.70px;width:98.60px;height:31.00px;border:2px solid #b54fd9;border-radius:40px;"></div>
<div class="t" style="left:341.50px;top:1148.94px;font-size:18.54px;color:#b54fd9;font-weight:700;letter-spacing:-0.040px;">CLIENT</div>
<div style="position:absolute;left:434.50px;top:1142.70px;width:286.50px;height:31.00px;border:2px solid #6fa52f;border-radius:40px;"></div>
<div class="t" style="left:450.00px;top:1148.94px;font-size:18.54px;color:#6fa52f;font-weight:700;letter-spacing:0.410px;">INSTALLMENTS PAYMENTS</div>
<div style="position:absolute;left:730.40px;top:1142.70px;width:141.40px;height:31.00px;border:2px solid #5bbdd6;border-radius:40px;"></div>
<div class="t" style="left:745.90px;top:1148.94px;font-size:18.54px;color:#5bbdd6;font-weight:700;letter-spacing:-0.075px;">BUCKETING</div>
<div style="position:absolute;left:882.40px;top:1142.70px;width:62.00px;height:31.00px;border:2px solid #4aad7d;border-radius:40px;"></div>
<div class="t" style="left:897.90px;top:1148.94px;font-size:18.54px;color:#4aad7d;font-weight:700;letter-spacing:0.100px;">INT</div>
<div style="position:absolute;left:955.00px;top:1142.70px;width:118.40px;height:31.00px;border:2px solid #3d8a3d;border-radius:40px;"></div>
<div class="t" style="left:970.50px;top:1148.94px;font-size:18.54px;color:#3d8a3d;font-weight:700;letter-spacing:0.017px;">NUMERIC</div>
<div style="position:absolute;left:246.00px;top:1271.65px;width:39.00px;height:39.00px;border:2px solid #cdd2d8;border-radius:7px;background:#fff;"></div>
<div class="t" style="left:1740.00px;top:1233.19px;font-size:28.84px;color:#0b1533;font-weight:700;letter-spacing:0.250px;">0.08202</div>
<div class="t" style="left:2019.40px;top:1233.19px;font-size:28.84px;color:#0b1533;font-weight:700;">8</div>
<div class="t" style="left:2036.00px;top:1241.34px;font-size:22.66px;color:#0b1533;letter-spacing:0.200px;-webkit-text-stroke:0.3px #0b1533;">/10</div>
<svg style="position:absolute;left:2100.50px;top:1228.25px;" width="40.60" height="40.60" viewBox="0 0 24 24" fill="none" stroke="#8a9099" stroke-width="1.537" stroke-linecap="round" stroke-linejoin="round"><path d="M3 12a9 9 0 1 0 18 0a9 9 0 1 0 -18 0"/><path d="M12 17l0 .01"/><path d="M12 13.5a1.5 1.5 0 0 1 1 -1.5a2.6 2.6 0 1 0 -3 -4"/></svg>
<div class="t" style="left:2259.90px;top:1233.29px;font-size:28.84px;color:#0b1533;letter-spacing:0.133px;-webkit-text-stroke:0.5px #0b1533;">V251202</div>
<svg style="position:absolute;left:2458.48px;top:1226.28px;" width="36.53" height="36.53" viewBox="0 0 24 24" fill="none" stroke="#3d8a3d" stroke-width="1.708" stroke-linecap="round" stroke-linejoin="round"><path d="M3 12a9 9 0 1 0 18 0a9 9 0 0 0 -18 0"/><path d="M9 12l2 2l4 -4"/></svg>
<div class="t" style="left:2504.00px;top:1230.69px;font-size:28.84px;color:#3d8a3d;font-weight:700;letter-spacing:-1.000px;">PRODUCTION READY</div>
<svg style="position:absolute;left:2806px;top:1228.3px;" width="10" height="32" viewBox="0 0 10 32" fill="none"><circle cx="5" cy="4.5" r="3.2" fill="#3b82e0"/><circle cx="5" cy="15" r="3.2" fill="#3b82e0"/><circle cx="5" cy="25.5" r="3.2" fill="#3b82e0"/></svg>
<svg style="position:absolute;left:0px;top:0px;" width="1" height="1" viewBox="0 0 1 1" fill="none"><circle cx="2469.85" cy="1295.71" r="5.86" stroke="#3b4459" stroke-width="2.1"/><path d="M2460.35 1307.55 C2462.09 1302.66 2464.43 1300.68 2469.85 1300.68 C2475.27 1300.68 2477.61 1302.66 2479.35 1307.55" stroke="#3b4459" stroke-width="2.1" stroke-linecap="round"/></svg>
<div class="t" style="left:2491.90px;top:1285.79px;font-size:24.72px;color:#3b4459;letter-spacing:0.375px;-webkit-text-stroke:0.3px #3b4459;">Xavier Conort</div>
<svg style="position:absolute;left:2668.15px;top:1285.40px;" width="27.80" height="27.80" viewBox="0 0 24 24" fill="none" stroke="#3b4459" stroke-width="1.899" stroke-linecap="round" stroke-linejoin="round"><path d="M3 12a9 9 0 1 0 18 0a9 9 0 0 0 -18 0"/><path d="M12 7v5l3 3"/></svg>
<div class="t" style="left:2706.50px;top:1285.79px;font-size:24.72px;color:#3b4459;letter-spacing:0.250px;-webkit-text-stroke:0.3px #3b4459;">a day ago</div>
<svg style="position:absolute;left:2952.50px;top:1226.66px;" width="32.65" height="32.65" viewBox="0 0 24 24" fill="none" stroke="#3d8a3d" stroke-width="1.764" stroke-linecap="round" stroke-linejoin="round"><path d="M4 13a8 8 0 0 1 7 7a6 6 0 0 0 3 -5a9 9 0 0 0 6 -8a3 3 0 0 0 -3 -3a9 9 0 0 0 -8 6a6 6 0 0 0 -5 3"/><path d="M7 14a6 6 0 0 0 -3 6a6 6 0 0 0 6 -3"/><path d="M14 9a1 1 0 1 0 2 0a1 1 0 1 0 -2 0"/></svg>
<div class="t" style="left:2994.00px;top:1230.79px;font-size:28.84px;color:#0b1533;-webkit-text-stroke:0.5px #0b1533;">1</div>
<div style="position:absolute;left:3129.20px;top:1227.00px;width:69.40px;height:69.40px;border:2px solid #3b82e0;border-radius:50%;"></div>
<svg style="position:absolute;left:3147.41px;top:1245.21px;" width="33.09" height="33.09" viewBox="0 0 24 24" fill="none" stroke="#3b82e0" stroke-width="1.886" stroke-linecap="round" stroke-linejoin="round"><path d="M12 5l0 14"/><path d="M5 12l14 0"/></svg>
<svg style="position:absolute;left:3246.30px;top:1267.50px;" width="47.30" height="47.30" viewBox="0 0 24 24" fill="none" stroke="#878d95" stroke-width="2.131" stroke-linecap="round" stroke-linejoin="round"><path d="M6 9l6 6l6 -6"/></svg>
<div class="t" style="left:327.00px;top:1235.49px;font-size:28.84px;color:#0b1533;letter-spacing:0.171px;-webkit-text-stroke:0.9px #0b1533;">CLIENT_Installments_AMT_PAYMENTs_when_PriorApplication_YIELD_GROUP_is_high_24cMo</div>
<svg style="position:absolute;left:1598.27px;top:1229.17px;" width="31.47" height="31.47" viewBox="0 0 24 24" fill="none" stroke="#3b82e0" stroke-width="1.831" stroke-linecap="round" stroke-linejoin="round"><path d="M3 12a9 9 0 1 0 18 0a9 9 0 0 0 -18 0"/><path d="M12 9h.01"/><path d="M11 12h1v4h1"/></svg>
<svg style="position:absolute;left:1644.15px;top:1228.60px;" width="31.80" height="31.80" viewBox="0 0 24 24" fill="none" stroke="#3b82e0" stroke-width="1.811" stroke-linecap="round" stroke-linejoin="round"><path d="M7 9.667a2.667 2.667 0 0 1 2.667 -2.667h8.666a2.667 2.667 0 0 1 2.667 2.667v8.666a2.667 2.667 0 0 1 -2.667 2.667h-8.666a2.667 2.667 0 0 1 -2.667 -2.667z"/><path d="M4.012 16.737a2.005 2.005 0 0 1 -1.012 -1.737v-10c0 -1.1 .9 -2 2 -2h10c.75 0 1.158 .385 1.5 1"/></svg>
<svg style="position:absolute;left:325px;top:1276.7px;" width="29" height="29" viewBox="0 0 29 29" fill="none"><rect x="1.2" y="1.2" width="26.6" height="26.6" rx="5" stroke="#3b82e0" stroke-width="2.4"/><path d="M4.2 9 H12.6 M4.2 20.4 H12.6" stroke="#3b82e0" stroke-width="2.5"/><path d="M8.4 9 V20.4" stroke="#3b82e0" stroke-width="2.6"/><path d="M15.9 9 H18.6 a4.4 4.4 0 0 1 4.4 4.4 V16 a4.4 4.4 0 0 1 -4.4 4.4 H15.9 Z" stroke="#3b82e0" stroke-width="2.8"/></svg>
<div style="position:absolute;left:326.00px;top:1326.30px;width:98.60px;height:31.00px;border:2px solid #b54fd9;border-radius:40px;"></div>
<div class="t" style="left:341.50px;top:1332.54px;font-size:18.54px;color:#b54fd9;font-weight:700;letter-spacing:-0.040px;">CLIENT</div>
<div style="position:absolute;left:434.50px;top:1326.30px;width:286.50px;height:31.00px;border:2px solid #6fa52f;border-radius:40px;"></div>
<div class="t" style="left:450.00px;top:1332.54px;font-size:18.54px;color:#6fa52f;font-weight:700;letter-spacing:0.410px;">INSTALLMENTS PAYMENTS</div>
<div style="position:absolute;left:730.40px;top:1326.30px;width:141.40px;height:31.00px;border:2px solid #5bbdd6;border-radius:40px;"></div>
<div class="t" style="left:745.90px;top:1332.54px;font-size:18.54px;color:#5bbdd6;font-weight:700;letter-spacing:-0.075px;">BUCKETING</div>
<div style="position:absolute;left:882.40px;top:1326.30px;width:89.90px;height:31.00px;border:2px solid #4aad7d;border-radius:40px;"></div>
<div class="t" style="left:897.90px;top:1332.54px;font-size:18.54px;color:#4aad7d;font-weight:700;letter-spacing:-0.600px;">FLOAT</div>
<div style="position:absolute;left:982.90px;top:1326.30px;width:118.50px;height:31.00px;border:2px solid #3d8a3d;border-radius:40px;"></div>
<div class="t" style="left:998.40px;top:1332.54px;font-size:18.54px;color:#3d8a3d;font-weight:700;letter-spacing:0.033px;">NUMERIC</div>
<div style="position:absolute;left:246.00px;top:1445.90px;width:39.00px;height:39.00px;border:2px solid #cdd2d8;border-radius:7px;background:#fff;"></div>
<div class="t" style="left:1740.00px;top:1412.89px;font-size:28.84px;color:#0b1533;font-weight:700;letter-spacing:0.250px;">0.05625</div>
<div class="t" style="left:2019.40px;top:1412.89px;font-size:28.84px;color:#0b1533;font-weight:700;">8</div>
<div class="t" style="left:2036.00px;top:1421.04px;font-size:22.66px;color:#0b1533;letter-spacing:0.200px;-webkit-text-stroke:0.3px #0b1533;">/10</div>
<svg style="position:absolute;left:2100.50px;top:1407.95px;" width="40.60" height="40.60" viewBox="0 0 24 24" fill="none" stroke="#8a9099" stroke-width="1.537" stroke-linecap="round" stroke-linejoin="round"><path d="M3 12a9 9 0 1 0 18 0a9 9 0 1 0 -18 0"/><path d="M12 17l0 .01"/><path d="M12 13.5a1.5 1.5 0 0 1 1 -1.5a2.6 2.6 0 1 0 -3 -4"/></svg>
<div class="t" style="left:2259.90px;top:1412.99px;font-size:28.84px;color:#0b1533;letter-spacing:0.133px;-webkit-text-stroke:0.5px #0b1533;">V251202</div>
<svg style="position:absolute;left:2458.48px;top:1405.98px;" width="36.53" height="36.53" viewBox="0 0 24 24" fill="none" stroke="#3d8a3d" stroke-width="1.708" stroke-linecap="round" stroke-linejoin="round"><path d="M3 12a9 9 0 1 0 18 0a9 9 0 0 0 -18 0"/><path d="M9 12l2 2l4 -4"/></svg>
<div class="t" style="left:2504.00px;top:1410.39px;font-size:28.84px;color:#3d8a3d;font-weight:700;letter-spacing:-1.000px;">PRODUCTION READY</div>
<svg style="position:absolute;left:2806px;top:1408px;" width="10" height="32" viewBox="0 0 10 32" fill="none"><circle cx="5" cy="4.5" r="3.2" fill="#3b82e0"/><circle cx="5" cy="15" r="3.2" fill="#3b82e0"/><circle cx="5" cy="25.5" r="3.2" fill="#3b82e0"/></svg>
<svg style="position:absolute;left:0px;top:0px;" width="1" height="1" viewBox="0 0 1 1" fill="none"><circle cx="2469.85" cy="1475.41" r="5.86" stroke="#3b4459" stroke-width="2.1"/><path d="M2460.35 1487.25 C2462.09 1482.36 2464.43 1480.38 2469.85 1480.38 C2475.27 1480.38 2477.61 1482.36 2479.35 1487.25" stroke="#3b4459" stroke-width="2.1" stroke-linecap="round"/></svg>
<div class="t" style="left:2491.90px;top:1465.49px;font-size:24.72px;color:#3b4459;letter-spacing:0.375px;-webkit-text-stroke:0.3px #3b4459;">Xavier Conort</div>
<svg style="position:absolute;left:2668.15px;top:1465.10px;" width="27.80" height="27.80" viewBox="0 0 24 24" fill="none" stroke="#3b4459" stroke-width="1.899" stroke-linecap="round" stroke-linejoin="round"><path d="M3 12a9 9 0 1 0 18 0a9 9 0 0 0 -18 0"/><path d="M12 7v5l3 3"/></svg>
<div class="t" style="left:2706.50px;top:1465.49px;font-size:24.72px;color:#3b4459;letter-spacing:0.250px;-webkit-text-stroke:0.3px #3b4459;">a day ago</div>
<svg style="position:absolute;left:2952.50px;top:1406.36px;" width="32.65" height="32.65" viewBox="0 0 24 24" fill="none" stroke="#3d8a3d" stroke-width="1.764" stroke-linecap="round" stroke-linejoin="round"><path d="M4 13a8 8 0 0 1 7 7a6 6 0 0 0 3 -5a9 9 0 0 0 6 -8a3 3 0 0 0 -3 -3a9 9 0 0 0 -8 6a6 6 0 0 0 -5 3"/><path d="M7 14a6 6 0 0 0 -3 6a6 6 0 0 0 6 -3"/><path d="M14 9a1 1 0 1 0 2 0a1 1 0 1 0 -2 0"/></svg>
<div class="t" style="left:2994.00px;top:1410.49px;font-size:28.84px;color:#0b1533;-webkit-text-stroke:0.5px #0b1533;">1</div>
<div style="position:absolute;left:3129.20px;top:1406.70px;width:69.40px;height:69.40px;border:2px solid #3b82e0;border-radius:50%;"></div>
<svg style="position:absolute;left:3147.41px;top:1424.91px;" width="33.09" height="33.09" viewBox="0 0 24 24" fill="none" stroke="#3b82e0" stroke-width="1.886" stroke-linecap="round" stroke-linejoin="round"><path d="M12 5l0 14"/><path d="M5 12l14 0"/></svg>
<svg style="position:absolute;left:3246.30px;top:1441.75px;" width="47.30" height="47.30" viewBox="0 0 24 24" fill="none" stroke="#878d95" stroke-width="2.131" stroke-linecap="round" stroke-linejoin="round"><path d="M6 9l6 6l6 -6"/></svg>
<div class="t" style="left:327.00px;top:1409.29px;font-size:28.84px;color:#0b1533;letter-spacing:0.209px;-webkit-text-stroke:0.9px #0b1533;">CLIENT_Installments_AMT_PAYMENTs_when_PriorApplication_YIELD_GROUP_is_low_normal_24cMo</div>
<svg style="position:absolute;left:338.27px;top:1443.27px;" width="31.47" height="31.47" viewBox="0 0 24 24" fill="none" stroke="#3b82e0" stroke-width="1.831" stroke-linecap="round" stroke-linejoin="round"><path d="M3 12a9 9 0 1 0 18 0a9 9 0 0 0 -18 0"/><path d="M12 9h.01"/><path d="M11 12h1v4h1"/></svg>
<svg style="position:absolute;left:383.95px;top:1442.70px;" width="31.80" height="31.80" viewBox="0 0 24 24" fill="none" stroke="#3b82e0" stroke-width="1.811" stroke-linecap="round" stroke-linejoin="round"><path d="M7 9.667a2.667 2.667 0 0 1 2.667 -2.667h8.666a2.667 2.667 0 0 1 2.667 2.667v8.666a2.667 2.667 0 0 1 -2.667 2.667h-8.666a2.667 2.667 0 0 1 -2.667 -2.667z"/><path d="M4.012 16.737a2.005 2.005 0 0 1 -1.012 -1.737v-10c0 -1.1 .9 -2 2 -2h10c.75 0 1.158 .385 1.5 1"/></svg>
<svg style="position:absolute;left:427px;top:1445px;" width="29" height="29" viewBox="0 0 29 29" fill="none"><rect x="1.2" y="1.2" width="26.6" height="26.6" rx="5" stroke="#3b82e0" stroke-width="2.4"/><path d="M4.2 9 H12.6 M4.2 20.4 H12.6" stroke="#3b82e0" stroke-width="2.5"/><path d="M8.4 9 V20.4" stroke="#3b82e0" stroke-width="2.6"/><path d="M15.9 9 H18.6 a4.4 4.4 0 0 1 4.4 4.4 V16 a4.4 4.4 0 0 1 -4.4 4.4 H15.9 Z" stroke="#3b82e0" stroke-width="2.8"/></svg>
<div style="position:absolute;left:326.00px;top:1495.00px;width:98.60px;height:31.00px;border:2px solid #b54fd9;border-radius:40px;"></div>
<div class="t" style="left:341.50px;top:1501.24px;font-size:18.54px;color:#b54fd9;font-weight:700;letter-spacing:-0.040px;">CLIENT</div>
<div style="position:absolute;left:434.50px;top:1495.00px;width:286.50px;height:31.00px;border:2px solid #6fa52f;border-radius:40px;"></div>
<div class="t" style="left:450.00px;top:1501.24px;font-size:18.54px;color:#6fa52f;font-weight:700;letter-spacing:0.410px;">INSTALLMENTS PAYMENTS</div>
<div style="position:absolute;left:730.40px;top:1495.00px;width:141.40px;height:31.00px;border:2px solid #5bbdd6;border-radius:40px;"></div>
<div class="t" style="left:745.90px;top:1501.24px;font-size:18.54px;color:#5bbdd6;font-weight:700;letter-spacing:-0.075px;">BUCKETING</div>
<div style="position:absolute;left:882.40px;top:1495.00px;width:89.90px;height:31.00px;border:2px solid #4aad7d;border-radius:40px;"></div>
<div class="t" style="left:897.90px;top:1501.24px;font-size:18.54px;color:#4aad7d;font-weight:700;letter-spacing:-0.600px;">FLOAT</div>
<div style="position:absolute;left:982.90px;top:1495.00px;width:118.50px;height:31.00px;border:2px solid #3d8a3d;border-radius:40px;"></div>
<div class="t" style="left:998.40px;top:1501.24px;font-size:18.54px;color:#3d8a3d;font-weight:700;letter-spacing:0.033px;">NUMERIC</div>
<div style="position:absolute;left:246.00px;top:1632.65px;width:39.00px;height:39.00px;border:2px solid #cdd2d8;border-radius:7px;background:#fff;"></div>
<div class="t" style="left:1740.00px;top:1581.69px;font-size:28.84px;color:#0b1533;font-weight:700;letter-spacing:0.250px;">0.03755</div>
<div class="t" style="left:2019.40px;top:1581.69px;font-size:28.84px;color:#0b1533;font-weight:700;">7</div>
<div class="t" style="left:2036.00px;top:1589.84px;font-size:22.66px;color:#0b1533;letter-spacing:0.200px;-webkit-text-stroke:0.3px #0b1533;">/10</div>
<svg style="position:absolute;left:2100.50px;top:1576.75px;" width="40.60" height="40.60" viewBox="0 0 24 24" fill="none" stroke="#8a9099" stroke-width="1.537" stroke-linecap="round" stroke-linejoin="round"><path d="M3 12a9 9 0 1 0 18 0a9 9 0 1 0 -18 0"/><path d="M12 17l0 .01"/><path d="M12 13.5a1.5 1.5 0 0 1 1 -1.5a2.6 2.6 0 1 0 -3 -4"/></svg>
<div class="t" style="left:2259.90px;top:1581.79px;font-size:28.84px;color:#0b1533;letter-spacing:0.133px;-webkit-text-stroke:0.5px #0b1533;">V251202</div>
<svg style="position:absolute;left:2458.48px;top:1574.78px;" width="36.53" height="36.53" viewBox="0 0 24 24" fill="none" stroke="#3d8a3d" stroke-width="1.708" stroke-linecap="round" stroke-linejoin="round"><path d="M3 12a9 9 0 1 0 18 0a9 9 0 0 0 -18 0"/><path d="M9 12l2 2l4 -4"/></svg>
<div class="t" style="left:2504.00px;top:1579.19px;font-size:28.84px;color:#3d8a3d;font-weight:700;letter-spacing:-1.000px;">PRODUCTION READY</div>
<svg style="position:absolute;left:2806px;top:1576.8px;" width="10" height="32" viewBox="0 0 10 32" fill="none"><circle cx="5" cy="4.5" r="3.2" fill="#3b82e0"/><circle cx="5" cy="15" r="3.2" fill="#3b82e0"/><circle cx="5" cy="25.5" r="3.2" fill="#3b82e0"/></svg>
<svg style="position:absolute;left:0px;top:0px;" width="1" height="1" viewBox="0 0 1 1" fill="none"><circle cx="2469.85" cy="1644.21" r="5.86" stroke="#3b4459" stroke-width="2.1"/><path d="M2460.35 1656.05 C2462.09 1651.16 2464.43 1649.18 2469.85 1649.18 C2475.27 1649.18 2477.61 1651.16 2479.35 1656.05" stroke="#3b4459" stroke-width="2.1" stroke-linecap="round"/></svg>
<div class="t" style="left:2491.90px;top:1634.29px;font-size:24.72px;color:#3b4459;letter-spacing:0.375px;-webkit-text-stroke:0.3px #3b4459;">Xavier Conort</div>
<svg style="position:absolute;left:2668.15px;top:1633.90px;" width="27.80" height="27.80" viewBox="0 0 24 24" fill="none" stroke="#3b4459" stroke-width="1.899" stroke-linecap="round" stroke-linejoin="round"><path d="M3 12a9 9 0 1 0 18 0a9 9 0 0 0 -18 0"/><path d="M12 7v5l3 3"/></svg>
<div class="t" style="left:2706.50px;top:1634.29px;font-size:24.72px;color:#3b4459;letter-spacing:0.250px;-webkit-text-stroke:0.3px #3b4459;">a day ago</div>
<svg style="position:absolute;left:2952.50px;top:1575.16px;" width="32.65" height="32.65" viewBox="0 0 24 24" fill="none" stroke="#3d8a3d" stroke-width="1.764" stroke-linecap="round" stroke-linejoin="round"><path d="M4 13a8 8 0 0 1 7 7a6 6 0 0 0 3 -5a9 9 0 0 0 6 -8a3 3 0 0 0 -3 -3a9 9 0 0 0 -8 6a6 6 0 0 0 -5 3"/><path d="M7 14a6 6 0 0 0 -3 6a6 6 0 0 0 6 -3"/><path d="M14 9a1 1 0 1 0 2 0a1 1 0 1 0 -2 0"/></svg>
<div class="t" style="left:2994.00px;top:1579.29px;font-size:28.84px;color:#0b1533;-webkit-text-stroke:0.5px #0b1533;">1</div>
<div style="position:absolute;left:3129.20px;top:1575.50px;width:69.40px;height:69.40px;border:2px solid #3b82e0;border-radius:50%;"></div>
<svg style="position:absolute;left:3147.41px;top:1593.71px;" width="33.09" height="33.09" viewBox="0 0 24 24" fill="none" stroke="#3b82e0" stroke-width="1.886" stroke-linecap="round" stroke-linejoin="round"><path d="M12 5l0 14"/><path d="M5 12l14 0"/></svg>
<svg style="position:absolute;left:3246.30px;top:1628.50px;" width="47.30" height="47.30" viewBox="0 0 24 24" fill="none" stroke="#878d95" stroke-width="2.131" stroke-linecap="round" stroke-linejoin="round"><path d="M6 9l6 6l6 -6"/></svg>
<div class="t" style="left:327.00px;top:1578.79px;font-size:28.84px;color:#0b1533;letter-spacing:-0.122px;-webkit-text-stroke:0.9px #0b1533;">CLIENT_PriorApplications_AMT_CREDITs_when_PriorApplication_WEEKDAY_APPR_PROCESS_START_</div>
<div class="t" style="left:327.00px;top:1614.39px;font-size:28.84px;color:#0b1533;letter-spacing:-0.606px;-webkit-text-stroke:0.9px #0b1533;">is_WEDNESDAY_104w</div>
<svg style="position:absolute;left:338.27px;top:1648.27px;" width="31.47" height="31.47" viewBox="0 0 24 24" fill="none" stroke="#3b82e0" stroke-width="1.831" stroke-linecap="round" stroke-linejoin="round"><path d="M3 12a9 9 0 1 0 18 0a9 9 0 0 0 -18 0"/><path d="M12 9h.01"/><path d="M11 12h1v4h1"/></svg>
<svg style="position:absolute;left:383.95px;top:1647.70px;" width="31.80" height="31.80" viewBox="0 0 24 24" fill="none" stroke="#3b82e0" stroke-width="1.811" stroke-linecap="round" stroke-linejoin="round"><path d="M7 9.667a2.667 2.667 0 0 1 2.667 -2.667h8.666a2.667 2.667 0 0 1 2.667 2.667v8.666a2.667 2.667 0 0 1 -2.667 2.667h-8.666a2.667 2.667 0 0 1 -2.667 -2.667z"/><path d="M4.012 16.737a2.005 2.005 0 0 1 -1.012 -1.737v-10c0 -1.1 .9 -2 2 -2h10c.75 0 1.158 .385 1.5 1"/></svg>
<svg style="position:absolute;left:427px;top:1650px;" width="29" height="29" viewBox="0 0 29 29" fill="none"><rect x="1.2" y="1.2" width="26.6" height="26.6" rx="5" stroke="#3b82e0" stroke-width="2.4"/><path d="M4.2 9 H12.6 M4.2 20.4 H12.6" stroke="#3b82e0" stroke-width="2.5"/><path d="M8.4 9 V20.4" stroke="#3b82e0" stroke-width="2.6"/><path d="M15.9 9 H18.6 a4.4 4.4 0 0 1 4.4 4.4 V16 a4.4 4.4 0 0 1 -4.4 4.4 H15.9 Z" stroke="#3b82e0" stroke-width="2.8"/></svg>
<div style="position:absolute;left:326.20px;top:1699.70px;width:98.50px;height:31.00px;border:2px solid #b54fd9;border-radius:40px;"></div>
<div class="t" style="left:341.70px;top:1705.94px;font-size:18.54px;color:#b54fd9;font-weight:700;letter-spacing:-0.060px;">CLIENT</div>
<div style="position:absolute;left:434.80px;top:1699.70px;width:258.20px;height:31.00px;border:2px solid #6fa52f;border-radius:40px;"></div>
<div class="t" style="left:450.30px;top:1705.94px;font-size:18.54px;color:#6fa52f;font-weight:700;letter-spacing:0.111px;">PREVIOUS APPLICATION</div>
<div style="position:absolute;left:703.20px;top:1699.70px;width:141.00px;height:31.00px;border:2px solid #5bbdd6;border-radius:40px;"></div>
<div class="t" style="left:718.70px;top:1705.94px;font-size:18.54px;color:#5bbdd6;font-weight:700;letter-spacing:-0.125px;">BUCKETING</div>
<div style="position:absolute;left:855.20px;top:1699.70px;width:89.60px;height:31.00px;border:2px solid #4aad7d;border-radius:40px;"></div>
<div class="t" style="left:870.70px;top:1705.94px;font-size:18.54px;color:#4aad7d;font-weight:700;letter-spacing:-0.675px;">FLOAT</div>
<div style="position:absolute;left:954.90px;top:1699.70px;width:118.80px;height:31.00px;border:2px solid #3d8a3d;border-radius:40px;"></div>
<div class="t" style="left:970.40px;top:1705.94px;font-size:18.54px;color:#3d8a3d;font-weight:700;letter-spacing:0.083px;">NUMERIC</div>
<div style="position:absolute;left:1084.20px;top:1699.70px;width:82.70px;height:31.00px;border:2px solid #8a8f96;border-radius:40px;"></div>
<div class="t" style="left:1099.70px;top:1705.94px;font-size:18.54px;color:#8a8f96;font-weight:700;letter-spacing:-0.525px;">1 DAY</div>
<div style="position:absolute;left:246.00px;top:1837.65px;width:39.00px;height:39.00px;border:2px solid #cdd2d8;border-radius:7px;background:#fff;"></div>
<div class="t" style="left:1740.00px;top:1786.39px;font-size:28.84px;color:#0b1533;font-weight:700;letter-spacing:0.250px;">0.02987</div>
<div class="t" style="left:2019.40px;top:1786.39px;font-size:28.84px;color:#0b1533;font-weight:700;">8</div>
<div class="t" style="left:2036.00px;top:1794.54px;font-size:22.66px;color:#0b1533;letter-spacing:0.200px;-webkit-text-stroke:0.3px #0b1533;">/10</div>
<svg style="position:absolute;left:2100.50px;top:1781.45px;" width="40.60" height="40.60" viewBox="0 0 24 24" fill="none" stroke="#8a9099" stroke-width="1.537" stroke-linecap="round" stroke-linejoin="round"><path d="M3 12a9 9 0 1 0 18 0a9 9 0 1 0 -18 0"/><path d="M12 17l0 .01"/><path d="M12 13.5a1.5 1.5 0 0 1 1 -1.5a2.6 2.6 0 1 0 -3 -4"/></svg>
<div class="t" style="left:2259.90px;top:1786.49px;font-size:28.84px;color:#0b1533;letter-spacing:0.133px;-webkit-text-stroke:0.5px #0b1533;">V251202</div>
<svg style="position:absolute;left:2458.48px;top:1779.48px;" width="36.53" height="36.53" viewBox="0 0 24 24" fill="none" stroke="#3d8a3d" stroke-width="1.708" stroke-linecap="round" stroke-linejoin="round"><path d="M3 12a9 9 0 1 0 18 0a9 9 0 0 0 -18 0"/><path d="M9 12l2 2l4 -4"/></svg>
<div class="t" style="left:2504.00px;top:1783.89px;font-size:28.84px;color:#3d8a3d;font-weight:700;letter-spacing:-1.000px;">PRODUCTION READY</div>
<svg style="position:absolute;left:2806px;top:1781.5px;" width="10" height="32" viewBox="0 0 10 32" fill="none"><circle cx="5" cy="4.5" r="3.2" fill="#3b82e0"/><circle cx="5" cy="15" r="3.2" fill="#3b82e0"/><circle cx="5" cy="25.5" r="3.2" fill="#3b82e0"/></svg>
<svg style="position:absolute;left:0px;top:0px;" width="1" height="1" viewBox="0 0 1 1" fill="none"><circle cx="2469.85" cy="1848.91" r="5.86" stroke="#3b4459" stroke-width="2.1"/><path d="M2460.35 1860.75 C2462.09 1855.86 2464.43 1853.88 2469.85 1853.88 C2475.27 1853.88 2477.61 1855.86 2479.35 1860.75" stroke="#3b4459" stroke-width="2.1" stroke-linecap="round"/></svg>
<div class="t" style="left:2491.90px;top:1838.99px;font-size:24.72px;color:#3b4459;letter-spacing:0.375px;-webkit-text-stroke:0.3px #3b4459;">Xavier Conort</div>
<svg style="position:absolute;left:2668.15px;top:1838.60px;" width="27.80" height="27.80" viewBox="0 0 24 24" fill="none" stroke="#3b4459" stroke-width="1.899" stroke-linecap="round" stroke-linejoin="round"><path d="M3 12a9 9 0 1 0 18 0a9 9 0 0 0 -18 0"/><path d="M12 7v5l3 3"/></svg>
<div class="t" style="left:2706.50px;top:1838.99px;font-size:24.72px;color:#3b4459;letter-spacing:0.250px;-webkit-text-stroke:0.3px #3b4459;">a day ago</div>
<svg style="position:absolute;left:2952.50px;top:1779.86px;" width="32.65" height="32.65" viewBox="0 0 24 24" fill="none" stroke="#3d8a3d" stroke-width="1.764" stroke-linecap="round" stroke-linejoin="round"><path d="M4 13a8 8 0 0 1 7 7a6 6 0 0 0 3 -5a9 9 0 0 0 6 -8a3 3 0 0 0 -3 -3a9 9 0 0 0 -8 6a6 6 0 0 0 -5 3"/><path d="M7 14a6 6 0 0 0 -3 6a6 6 0 0 0 6 -3"/><path d="M14 9a1 1 0 1 0 2 0a1 1 0 1 0 -2 0"/></svg>
<div class="t" style="left:2994.00px;top:1783.99px;font-size:28.84px;color:#0b1533;-webkit-text-stroke:0.5px #0b1533;">1</div>
<div style="position:absolute;left:3129.20px;top:1780.20px;width:69.40px;height:69.40px;border:2px solid #3b82e0;border-radius:50%;"></div>
<svg style="position:absolute;left:3147.41px;top:1798.41px;" width="33.09" height="33.09" viewBox="0 0 24 24" fill="none" stroke="#3b82e0" stroke-width="1.886" stroke-linecap="round" stroke-linejoin="round"><path d="M12 5l0 14"/><path d="M5 12l14 0"/></svg>
<svg style="position:absolute;left:3246.30px;top:1833.50px;" width="47.30" height="47.30" viewBox="0 0 24 24" fill="none" stroke="#878d95" stroke-width="2.131" stroke-linecap="round" stroke-linejoin="round"><path d="M6 9l6 6l6 -6"/></svg>
<div class="t" style="left:327.00px;top:1783.19px;font-size:28.84px;color:#0b1533;letter-spacing:0.050px;-webkit-text-stroke:0.9px #0b1533;">CLIENT_PriorApplications_AMT_CREDITs_when_PriorApplication_PRODUCT_COMBINATION_is_Cash_</div>
<div class="t" style="left:327.00px;top:1819.09px;font-size:28.84px;color:#0b1533;letter-spacing:-0.081px;-webkit-text-stroke:0.9px #0b1533;">X_Sell:_high_104w</div>
<svg style="position:absolute;left:338.27px;top:1853.67px;" width="31.47" height="31.47" viewBox="0 0 24 24" fill="none" stroke="#3b82e0" stroke-width="1.831" stroke-linecap="round" stroke-linejoin="round"><path d="M3 12a9 9 0 1 0 18 0a9 9 0 0 0 -18 0"/><path d="M12 9h.01"/><path d="M11 12h1v4h1"/></svg>
<svg style="position:absolute;left:383.95px;top:1853.20px;" width="31.80" height="31.80" viewBox="0 0 24 24" fill="none" stroke="#3b82e0" stroke-width="1.811" stroke-linecap="round" stroke-linejoin="round"><path d="M7 9.667a2.667 2.667 0 0 1 2.667 -2.667h8.666a2.667 2.667 0 0 1 2.667 2.667v8.666a2.667 2.667 0 0 1 -2.667 2.667h-8.666a2.667 2.667 0 0 1 -2.667 -2.667z"/><path d="M4.012 16.737a2.005 2.005 0 0 1 -1.012 -1.737v-10c0 -1.1 .9 -2 2 -2h10c.75 0 1.158 .385 1.5 1"/></svg>
<svg style="position:absolute;left:427px;top:1855px;" width="29" height="29" viewBox="0 0 29 29" fill="none"><rect x="1.2" y="1.2" width="26.6" height="26.6" rx="5" stroke="#3b82e0" stroke-width="2.4"/><path d="M4.2 9 H12.6 M4.2 20.4 H12.6" stroke="#3b82e0" stroke-width="2.5"/><path d="M8.4 9 V20.4" stroke="#3b82e0" stroke-width="2.6"/><path d="M15.9 9 H18.6 a4.4 4.4 0 0 1 4.4 4.4 V16 a4.4 4.4 0 0 1 -4.4 4.4 H15.9 Z" stroke="#3b82e0" stroke-width="2.8"/></svg>
<div style="position:absolute;left:326.20px;top:1904.50px;width:98.50px;height:31.00px;border:2px solid #b54fd9;border-radius:40px;"></div>
<div class="t" style="left:341.70px;top:1910.74px;font-size:18.54px;color:#b54fd9;font-weight:700;letter-spacing:-0.060px;">CLIENT</div>
<div style="position:absolute;left:434.80px;top:1904.50px;width:258.20px;height:31.00px;border:2px solid #6fa52f;border-radius:40px;"></div>
<div class="t" style="left:450.30px;top:1910.74px;font-size:18.54px;color:#6fa52f;font-weight:700;letter-spacing:0.111px;">PREVIOUS APPLICATION</div>
<div style="position:absolute;left:703.20px;top:1904.50px;width:141.00px;height:31.00px;border:2px solid #5bbdd6;border-radius:40px;"></div>
<div class="t" style="left:718.70px;top:1910.74px;font-size:18.54px;color:#5bbdd6;font-weight:700;letter-spacing:-0.125px;">BUCKETING</div>
<div style="position:absolute;left:855.20px;top:1904.50px;width:89.60px;height:31.00px;border:2px solid #4aad7d;border-radius:40px;"></div>
<div class="t" style="left:870.70px;top:1910.74px;font-size:18.54px;color:#4aad7d;font-weight:700;letter-spacing:-0.675px;">FLOAT</div>
<div style="position:absolute;left:954.90px;top:1904.50px;width:118.80px;height:31.00px;border:2px solid #3d8a3d;border-radius:40px;"></div>
<div class="t" style="left:970.40px;top:1910.74px;font-size:18.54px;color:#3d8a3d;font-weight:700;letter-spacing:0.083px;">NUMERIC</div>
<div style="position:absolute;left:1084.20px;top:1904.50px;width:82.70px;height:31.00px;border:2px solid #8a8f96;border-radius:40px;"></div>
<div class="t" style="left:1099.70px;top:1910.74px;font-size:18.54px;color:#8a8f96;font-weight:700;letter-spacing:-0.525px;">1 DAY</div>
<div style="position:absolute;left:0;top:0;width:3444px;height:2154px;clip-path:inset(1960px 0 157px 0);">
<svg style="position:absolute;left:1533.97px;top:1987.27px;" width="31.47" height="31.47" viewBox="0 0 24 24" fill="none" stroke="#3b82e0" stroke-width="1.831" stroke-linecap="round" stroke-linejoin="round"><path d="M3 12a9 9 0 1 0 18 0a9 9 0 0 0 -18 0"/><path d="M12 9h.01"/><path d="M11 12h1v4h1"/></svg>
<svg style="position:absolute;left:1577.85px;top:1986.70px;" width="31.80" height="31.80" viewBox="0 0 24 24" fill="none" stroke="#3b82e0" stroke-width="1.811" stroke-linecap="round" stroke-linejoin="round"><path d="M7 9.667a2.667 2.667 0 0 1 2.667 -2.667h8.666a2.667 2.667 0 0 1 2.667 2.667v8.666a2.667 2.667 0 0 1 -2.667 2.667h-8.666a2.667 2.667 0 0 1 -2.667 -2.667z"/><path d="M4.012 16.737a2.005 2.005 0 0 1 -1.012 -1.737v-10c0 -1.1 .9 -2 2 -2h10c.75 0 1.158 .385 1.5 1"/></svg>
<svg style="position:absolute;left:1620.8px;top:1988.5px;" width="29" height="29" viewBox="0 0 29 29" fill="none"><rect x="1.2" y="1.2" width="26.6" height="26.6" rx="5" stroke="#3b82e0" stroke-width="2.4"/><path d="M4.2 9 H12.6 M4.2 20.4 H12.6" stroke="#3b82e0" stroke-width="2.5"/><path d="M8.4 9 V20.4" stroke="#3b82e0" stroke-width="2.6"/><path d="M15.9 9 H18.6 a4.4 4.4 0 0 1 4.4 4.4 V16 a4.4 4.4 0 0 1 -4.4 4.4 H15.9 Z" stroke="#3b82e0" stroke-width="2.8"/></svg>
<div class="t" style="left:1740.00px;top:1991.69px;font-size:28.84px;color:#0b1533;font-weight:700;letter-spacing:0.250px;">0.02461</div>
<div class="t" style="left:2019.40px;top:1991.69px;font-size:28.84px;color:#0b1533;font-weight:700;">8</div>
<div class="t" style="left:2036.00px;top:1999.84px;font-size:22.66px;color:#0b1533;letter-spacing:0.200px;-webkit-text-stroke:0.3px #0b1533;">/10</div>
<svg style="position:absolute;left:2100.50px;top:1986.75px;" width="40.60" height="40.60" viewBox="0 0 24 24" fill="none" stroke="#8a9099" stroke-width="1.537" stroke-linecap="round" stroke-linejoin="round"><path d="M3 12a9 9 0 1 0 18 0a9 9 0 1 0 -18 0"/><path d="M12 17l0 .01"/><path d="M12 13.5a1.5 1.5 0 0 1 1 -1.5a2.6 2.6 0 1 0 -3 -4"/></svg>
<div class="t" style="left:2259.90px;top:1991.79px;font-size:28.84px;color:#0b1533;letter-spacing:0.133px;-webkit-text-stroke:0.5px #0b1533;">V251202</div>
<svg style="position:absolute;left:2458.48px;top:1984.78px;" width="36.53" height="36.53" viewBox="0 0 24 24" fill="none" stroke="#3d8a3d" stroke-width="1.708" stroke-linecap="round" stroke-linejoin="round"><path d="M3 12a9 9 0 1 0 18 0a9 9 0 0 0 -18 0"/><path d="M9 12l2 2l4 -4"/></svg>
<div class="t" style="left:2504.00px;top:1989.19px;font-size:28.84px;color:#3d8a3d;font-weight:700;letter-spacing:-1.000px;">PRODUCTION READY</div>
<svg style="position:absolute;left:2806px;top:1986.8px;" width="10" height="32" viewBox="0 0 10 32" fill="none"><circle cx="5" cy="4.5" r="3.2" fill="#3b82e0"/><circle cx="5" cy="15" r="3.2" fill="#3b82e0"/><circle cx="5" cy="25.5" r="3.2" fill="#3b82e0"/></svg>
<svg style="position:absolute;left:0px;top:0px;" width="1" height="1" viewBox="0 0 1 1" fill="none"><circle cx="2469.85" cy="2054.21" r="5.86" stroke="#3b4459" stroke-width="2.1"/><path d="M2460.35 2066.05 C2462.09 2061.16 2464.43 2059.18 2469.85 2059.18 C2475.27 2059.18 2477.61 2061.16 2479.35 2066.05" stroke="#3b4459" stroke-width="2.1" stroke-linecap="round"/></svg>
<div class="t" style="left:2491.90px;top:2044.29px;font-size:24.72px;color:#3b4459;letter-spacing:0.375px;-webkit-text-stroke:0.3px #3b4459;">Xavier Conort</div>
<svg style="position:absolute;left:2668.15px;top:2043.90px;" width="27.80" height="27.80" viewBox="0 0 24 24" fill="none" stroke="#3b4459" stroke-width="1.899" stroke-linecap="round" stroke-linejoin="round"><path d="M3 12a9 9 0 1 0 18 0a9 9 0 0 0 -18 0"/><path d="M12 7v5l3 3"/></svg>
<div class="t" style="left:2706.50px;top:2044.29px;font-size:24.72px;color:#3b4459;letter-spacing:0.250px;-webkit-text-stroke:0.3px #3b4459;">a day ago</div>
<svg style="position:absolute;left:2952.50px;top:1985.16px;" width="32.65" height="32.65" viewBox="0 0 24 24" fill="none" stroke="#3d8a3d" stroke-width="1.764" stroke-linecap="round" stroke-linejoin="round"><path d="M4 13a8 8 0 0 1 7 7a6 6 0 0 0 3 -5a9 9 0 0 0 6 -8a3 3 0 0 0 -3 -3a9 9 0 0 0 -8 6a6 6 0 0 0 -5 3"/><path d="M7 14a6 6 0 0 0 -3 6a6 6 0 0 0 6 -3"/><path d="M14 9a1 1 0 1 0 2 0a1 1 0 1 0 -2 0"/></svg>
<div class="t" style="left:2994.00px;top:1989.29px;font-size:28.84px;color:#0b1533;-webkit-text-stroke:0.5px #0b1533;">1</div>
<div style="position:absolute;left:3129.20px;top:1985.50px;width:69.40px;height:69.40px;border:2px solid #3b82e0;border-radius:50%;"></div>
<svg style="position:absolute;left:3147.41px;top:2003.71px;" width="33.09" height="33.09" viewBox="0 0 24 24" fill="none" stroke="#3b82e0" stroke-width="1.886" stroke-linecap="round" stroke-linejoin="round"><path d="M12 5l0 14"/><path d="M5 12l14 0"/></svg>
</div>
<div style="position:absolute;left:224.80px;top:1996.40px;width:3114.70px;height:78.10px;background:#f6f7f9;border-top:2px solid #d9dde3;"></div>
<div style="position:absolute;left:224.80px;top:753.50px;width:3114.70px;height:1321.00px;border:2px solid #d9dde3;"></div>
<div class="t" style="left:243.40px;top:2022.99px;font-size:24.72px;color:#0b1533;font-weight:700;letter-spacing:-1.157px;">Results:</div>
<div class="t" style="left:342.20px;top:2022.99px;font-size:24.72px;color:#0b1533;letter-spacing:-0.491px;-webkit-text-stroke:0.5px #0b1533;">1 - 14 of 14</div>
<div class="t" style="left:2746.80px;top:2022.99px;font-size:24.72px;color:#0b1533;font-weight:700;letter-spacing:-0.438px;">Rows per page:</div>
<div style="position:absolute;left:2956.30px;top:2006.30px;width:159.00px;height:58.90px;border:2px solid #cbcfd5;border-radius:9px;background:#fff;"></div>
<div class="t" style="left:2978.80px;top:2025.19px;font-size:20.6px;color:#0b1533;letter-spacing:-0.200px;-webkit-text-stroke:0.4px #0b1533;">25</div>
<svg style="position:absolute;left:3073.44px;top:2023.74px;" width="25.03" height="25.03" viewBox="0 0 24 24" fill="none" stroke="#6b7280" stroke-width="1.822" stroke-linecap="round" stroke-linejoin="round"><path d="M8 9l4 -4l4 4"/><path d="M16 15l-4 4l-4 -4"/></svg>
<div style="position:absolute;left:3145.70px;top:2009.60px;width:52.40px;height:52.40px;background:#f8f9fb;border-radius:50%;"></div>
<svg style="position:absolute;left:3161.30px;top:2025.25px;" width="21.40" height="21.40" viewBox="0 0 24 24" fill="none" stroke="#8a8f96" stroke-width="2.467" stroke-linecap="round" stroke-linejoin="round"><path d="M15 6l-6 6l6 6"/></svg>
<div style="position:absolute;left:3208.00px;top:2009.70px;width:52.00px;height:52.00px;background:#3b78ee;border-radius:50%;"></div>
<div class="t" style="left:3229.70px;top:2023.86px;font-size:23.69px;color:#ffffff;-webkit-text-stroke:0.3px #ffffff;">1</div>
<div style="position:absolute;left:3270.00px;top:2009.60px;width:52.40px;height:52.40px;background:#f8f9fb;border-radius:50%;"></div>
<svg style="position:absolute;left:3284.80px;top:2025.25px;" width="21.40" height="21.40" viewBox="0 0 24 24" fill="none" stroke="#8a8f96" stroke-width="2.467" stroke-linecap="round" stroke-linejoin="round"><path d="M9 6l6 6l-6 6"/></svg>
<div style="position:absolute;left:3328.70px;top:2016.20px;width:99.60px;height:99.60px;background:#3b78ee;border-radius:50%;box-shadow:0 4px 12px rgba(0,0,0,0.25);"></div>
<div class="t" style="left:3360.00px;top:2036.22px;font-size:59.74px;color:#ffffff;font-weight:700;">?</div>
<svg style="position:absolute;left:33.28px;top:365.43px;" width="40.73" height="40.73" viewBox="0 0 24 24" fill="none" stroke="#4a4f58" stroke-width="1.650" stroke-linecap="round" stroke-linejoin="round"><path d="M6 21l6 -5l6 5"/><path d="M12 13v8"/><path d="M3.294 13.678l.166 .281c.52 .88 1.624 1.265 2.605 .91l14.242 -5.165a1.023 1.023 0 0 0 .565 -1.456l-2.62 -4.705a1.087 1.087 0 0 0 -1.447 -.42l-.056 .032l-12.694 7.618c-1.02 .613 -1.357 1.897 -.76 2.905z"/><path d="M14 5l3 5.5"/></svg>
<svg style="position:absolute;left:0px;top:500px;" width="116" height="70" viewBox="0 0 116 70" fill="none"><g transform="translate(0,-500)"><path d="M44.32 518.08 L48.48 518.08 L48.50 521.15 L51.10 522.23 L53.28 520.07 L56.23 523.02 L54.07 525.20 L55.15 527.80 L58.22 527.82 L58.22 531.98 L55.15 532.00 L54.07 534.60 L56.23 536.78 L53.28 539.73 L51.10 537.57 L48.50 538.65 L48.48 541.72 L44.32 541.72 L44.30 538.65 L41.70 537.57 L39.52 539.73 L36.57 536.78 L38.73 534.60 L37.65 532.00 L34.58 531.98 L34.58 527.82 L37.65 527.80 L38.73 525.20 L36.57 523.02 L39.52 520.07 L41.70 522.23 L44.30 521.15Z" stroke="#4a4f58" stroke-width="2.2" stroke-linejoin="round" fill="#fdfdfe"/>
<circle cx="46.4" cy="529.9" r="4.6" stroke="#4a4f58" stroke-width="2.2"/>
<path d="M52 519.5 C55 518.5 58 518.3 61 519 C67 520.5 70 526 70 531 L69.5 535 L72 540 L69 541.5 L69 547 C69 549.5 67.5 550.7 65 550.7 L61.6 550.7 L61.6 557 L45.7 557 L45.7 546 C43 543.5 41.5 541.8 40.8 540" stroke="#4a4f58" stroke-width="2.4" stroke-linejoin="round" stroke-linecap="round"/></g></svg>
<svg style="position:absolute;left:34.30px;top:670.60px;" width="39.20" height="39.20" viewBox="0 0 24 24" fill="none" stroke="#4a4f58" stroke-width="1.714" stroke-linecap="round" stroke-linejoin="round"><path d="M3 12h1m8 -9v1m8 8h1m-15.4 -6.4l.7 .7m12.1 -.7l-.7 .7"/><path d="M9 16a5 5 0 1 1 6 0a3.5 3.5 0 0 0 -1 3a2 2 0 0 1 -4 0a3.5 3.5 0 0 0 -1 -3"/><path d="M9.7 17l4.6 0"/></svg>
<div style="position:absolute;left:0.00px;top:769.70px;width:116.00px;height:151.30px;background:#e8f2fd;"></div>
<div style="position:absolute;left:107.60px;top:769.70px;width:8.40px;height:151.30px;background:#2f66d8;"></div>
<svg style="position:absolute;left:0px;top:800px;" width="116" height="80" viewBox="0 0 116 80" fill="none"><g transform="translate(0,-800)"><path d="M43.5 826.5 H56.5" stroke="#4a4f58" stroke-width="3" stroke-linecap="round"/>
<path d="M47.5 826.5 V836.5 H52.5 V826.5" stroke="#4a4f58" stroke-width="2.6" stroke-linejoin="round"/>
<path d="M47.5 836.5 L39.5 855 a1.5 1.5 0 0 0 1.4 2 H58.6 a1.5 1.5 0 0 0 1.4 -2 L52.5 836.5" stroke="#4a4f58" stroke-width="3" stroke-linejoin="round"/></g></svg>
<svg style="position:absolute;left:34.66px;top:973.93px;" width="39.24" height="39.24" viewBox="0 0 24 24" fill="none" stroke="#4a4f58" stroke-width="1.835" stroke-linecap="round" stroke-linejoin="round"><path d="M5 12l5 5l10 -10"/></svg>
<svg style="position:absolute;left:0px;top:1120px;" width="116" height="50" viewBox="0 0 116 50" fill="none"><g transform="translate(0,-1120)"><path d="M38.5 1145.5 H48 L51 1158 L57.6 1132 L61.5 1145.5 H69.5" stroke="#4a4f58" stroke-width="3" stroke-linecap="round" stroke-linejoin="round"/></g></svg>
<svg style="position:absolute;left:33.37px;top:1903.52px;" width="40.87" height="40.87" viewBox="0 0 24 24" fill="none" stroke="#4a4f58" stroke-width="1.644" stroke-linecap="round" stroke-linejoin="round"><path d="M11.46 20.846a12 12 0 0 1 -7.96 -14.846a12 12 0 0 0 8.5 -3a12 12 0 0 0 8.5 3a12 12 0 0 1 -.09 7.06"/><path d="M15 19l2 2l4 -4"/></svg>
<svg style="position:absolute;left:32.79px;top:2054.98px;" width="41.51" height="41.51" viewBox="0 0 24 24" fill="none" stroke="#4a4f58" stroke-width="1.619" stroke-linecap="round" stroke-linejoin="round"><path d="M8 7a4 4 0 1 0 8 0a4 4 0 0 0 -8 0"/><path d="M6 21v-2a4 4 0 0 1 4 -4h1.5"/><path d="M15 18a3 3 0 1 0 6 0a3 3 0 1 0 -6 0"/><path d="M20.2 20.2l1.8 1.8"/></svg>
</div></body></html>
